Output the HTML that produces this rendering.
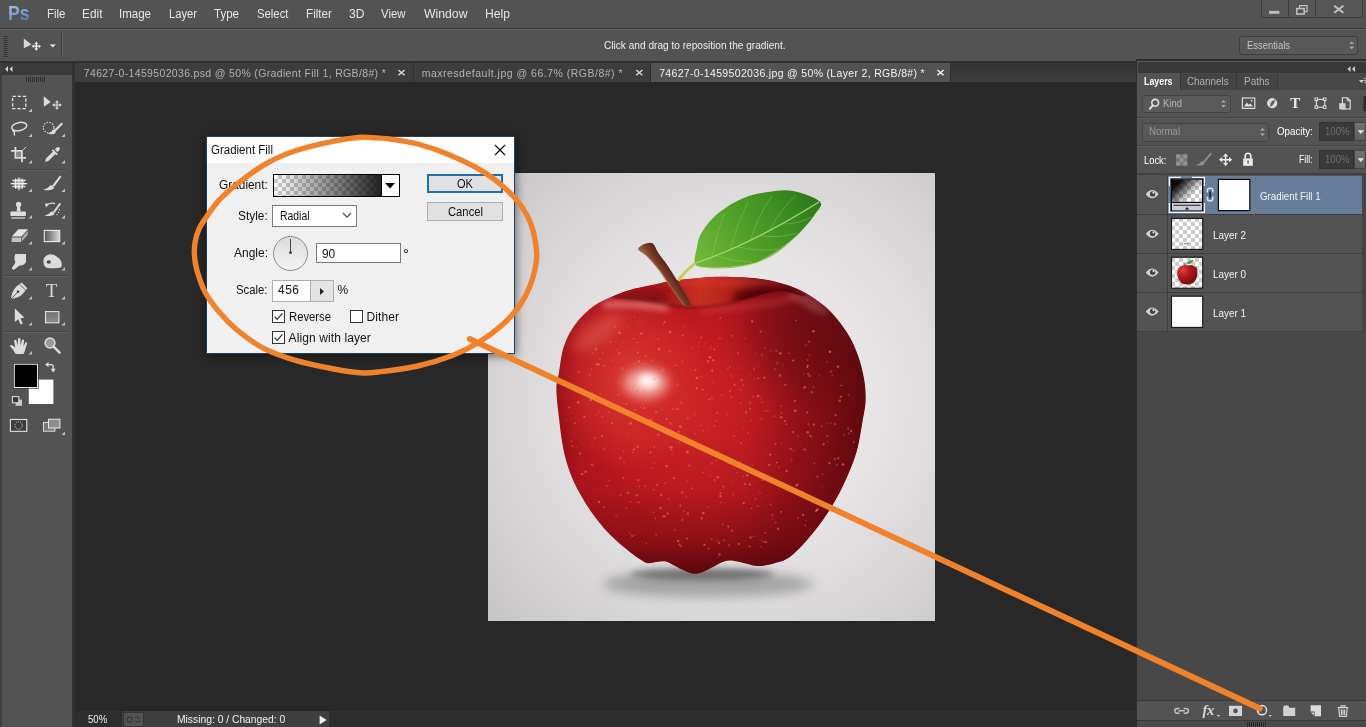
<!DOCTYPE html>
<html lang="en">
<head>
<meta charset="utf-8">
<title>Photoshop - Gradient Fill</title>
<style>
html,body{margin:0;padding:0;background:#282828;}
body{width:1366px;height:727px;overflow:hidden;font-family:"Liberation Sans","DejaVu Sans",sans-serif;}
#app{position:relative;width:1366px;height:727px;overflow:hidden;background:#282828;}
#app div,#app svg,#app span.t{position:absolute;}
.t{white-space:pre;line-height:normal;}
.bx{box-sizing:border-box;}
.t{transform-origin:0 0;}
#texts,#toolicons,#panelicons,#topicons{will-change:transform;}
#texts{left:0;top:0;width:1366px;height:727px;}

</style>
</head>
<body>
<div id="app">
<!-- menu bar -->
<div id="menubar" style="left:0;top:0;width:1366px;height:28px;background:#535353"></div>
<div style="left:0;top:28px;width:1366px;height:1px;background:#353535"></div>
<!-- options bar -->
<div id="optbar" style="left:0;top:29px;width:1366px;height:32px;background:#535353;border-top:1px solid #656565" class="bx"></div>
<div style="left:0;top:61px;width:1366px;height:2px;background:#303030"></div>
<div style="left:61px;top:33px;width:1px;height:24px;background:#3d3d3d"></div>
<div style="left:62px;top:33px;width:1px;height:24px;background:#626262"></div>
<!-- window buttons -->
<div class="bx" style="left:1261px;top:0;width:102px;height:18px;border:1px solid #3c3c3c;border-top:none;background:#565656"></div>
<div style="left:1288px;top:0;width:1px;height:18px;background:#3c3c3c"></div>
<div style="left:1315px;top:0;width:1px;height:18px;background:#3c3c3c"></div>
<!-- essentials -->
<div class="bx" style="left:1239px;top:36px;width:119px;height:19px;border:1px solid #3e3e3e;border-radius:3px;background:#585858"></div>
<!-- tools panel -->
<div id="tools" style="left:0;top:63px;width:72px;height:664px;background:#535353"></div>
<div style="left:0;top:63px;width:72px;height:12px;background:#3a3a3a"></div>
<div style="left:0;top:63px;width:2px;height:664px;background:#3e3e3e"></div>
<div style="left:72px;top:63px;width:3px;height:664px;background:#323232"></div>
<div style="left:5px;top:169px;width:62px;height:1px;background:#454545"></div>
<div style="left:5px;top:170px;width:62px;height:1px;background:#5d5d5d"></div>
<div style="left:5px;top:275px;width:62px;height:1px;background:#454545"></div>
<div style="left:5px;top:276px;width:62px;height:1px;background:#5d5d5d"></div>
<div style="left:5px;top:331px;width:62px;height:1px;background:#454545"></div>
<div style="left:5px;top:332px;width:62px;height:1px;background:#5d5d5d"></div>
<!-- doc tab bar -->
<div id="tabbar" style="left:75px;top:63px;width:1062px;height:19px;background:linear-gradient(180deg,#353535 0%,#3a3a3a 60%,#3d3d3d 100%)"></div>
<div style="left:75px;top:63px;width:338px;height:19px;background:#3d3d3d"></div>
<div style="left:413px;top:63px;width:1px;height:19px;background:#2e2e2e"></div>
<div style="left:414px;top:63px;width:236px;height:19px;background:#3d3d3d"></div>
<div style="left:650px;top:63px;width:1px;height:19px;background:#2e2e2e"></div>
<div style="left:651px;top:63px;width:299px;height:19px;background:#535353"></div>
<div style="left:950px;top:63px;width:1px;height:19px;background:#2e2e2e"></div>
<!-- canvas -->
<div id="canvas" style="left:75px;top:82px;width:1062px;height:629px;background:#282828"></div>
<!-- status bar -->
<div id="status" style="left:75px;top:711px;width:1062px;height:16px;background:#2e2e2e"></div>
<div style="left:122px;top:711px;width:207px;height:16px;background:#404040"></div>
<div class="bx" style="left:123px;top:712px;width:21px;height:15px;background:#535353;border:1px solid #353535"></div>
<!-- right panel -->
<div id="rpanel" style="left:1137px;top:60px;width:229px;height:667px;background:#535353"></div>
<div style="left:1136px;top:60px;width:1px;height:667px;background:#2e2e2e"></div>
<div style="left:1136px;top:59px;width:230px;height:2px;background:#2e2e2e"></div>
<div class="bx" style="left:1137px;top:61px;width:229px;height:12px;background:#383838;border-top:1px solid #5a5a5a;border-left:1px solid #505050;border-top-left-radius:3px"></div>
<div style="left:1137px;top:73px;width:229px;height:17px;background:#484848"></div>
<div style="left:1137px;top:73px;width:43px;height:18px;background:#535353"></div>
<div style="left:1180px;top:73px;width:1px;height:17px;background:#383838"></div>
<div style="left:1181px;top:74px;width:55px;height:16px;background:#444"></div>
<div style="left:1236px;top:73px;width:1px;height:17px;background:#383838"></div>
<div style="left:1237px;top:74px;width:40px;height:16px;background:#444"></div>
<div style="left:1277px;top:73px;width:1px;height:17px;background:#383838"></div>
<!-- kind dropdown -->
<div class="bx" style="left:1142px;top:95px;width:89px;height:18px;border:1px solid #434343;border-radius:3px;background:#595959"></div>
<div style="left:1137px;top:117px;width:229px;height:1px;background:#434343"></div>
<div style="left:1137px;top:118px;width:229px;height:1px;background:#5d5d5d"></div>
<!-- blend dropdown -->
<div class="bx" style="left:1142px;top:123px;width:127px;height:19px;border:1px solid #434343;border-radius:3px;background:#595959"></div>
<div class="bx" style="left:1319px;top:122px;width:35px;height:19px;background:#3a3a3a;border:1px solid #333"></div>
<div class="bx" style="left:1354px;top:122px;width:12px;height:19px;background:linear-gradient(180deg,#727272,#5e5e5e);border:1px solid #444"></div>
<div style="left:1137px;top:145px;width:229px;height:1px;background:#434343"></div>
<div style="left:1137px;top:146px;width:229px;height:1px;background:#5d5d5d"></div>
<div class="bx" style="left:1319px;top:150px;width:35px;height:19px;background:#3a3a3a;border:1px solid #333"></div>
<div class="bx" style="left:1354px;top:150px;width:12px;height:19px;background:linear-gradient(180deg,#727272,#5e5e5e);border:1px solid #444"></div>
<!-- layers list -->
<div style="left:1137px;top:173px;width:229px;height:2px;background:#404040"></div>
<div style="left:1137px;top:175px;width:225px;height:157px;background:#535353"></div>
<div style="left:1168px;top:176px;width:194px;height:38px;background:#677d9a"></div>
<div style="left:1137px;top:214px;width:225px;height:1px;background:#3e3e3e"></div>
<div style="left:1137px;top:253px;width:225px;height:1px;background:#3e3e3e"></div>
<div style="left:1137px;top:292px;width:225px;height:1px;background:#3e3e3e"></div>
<div style="left:1137px;top:331px;width:225px;height:1px;background:#3e3e3e"></div>
<div style="left:1167px;top:175px;width:1px;height:157px;background:#3e3e3e"></div>
<div style="left:1362px;top:175px;width:4px;height:157px;background:#444"></div>
<div style="left:1137px;top:332px;width:229px;height:369px;background:#484848"></div>
<!-- bottom bar -->
<div style="left:1137px;top:700px;width:229px;height:1px;background:#383838"></div>
<div style="left:1137px;top:701px;width:229px;height:19px;background:#535353"></div>
<div style="left:1137px;top:720px;width:229px;height:1px;background:#383838"></div>
<div style="left:1137px;top:721px;width:229px;height:6px;background:#4a4a4a"></div>

<!-- tools panel icons (page coordinates) -->
<svg id="toolicons" style="left:0;top:63px" width="72" height="400" viewBox="0 63 72 400">
  <g fill="#dcdcdc" stroke="none">
    <!-- header collapse arrows -->
    <path d="M8 66 L8 72 L5 69 Z M12.5 66 L12.5 72 L9.5 69 Z" fill="#d0d0d0"/>
    <!-- grip -->
    <g fill="#2f2f2f"><rect x="26" y="77" width="1" height="5"/><rect x="28" y="77" width="1" height="5"/><rect x="30" y="77" width="1" height="5"/><rect x="32" y="77" width="1" height="5"/><rect x="34" y="77" width="1" height="5"/><rect x="36" y="77" width="1" height="5"/><rect x="38" y="77" width="1" height="5"/><rect x="40" y="77" width="1" height="5"/><rect x="42" y="77" width="1" height="5"/><rect x="44" y="77" width="1" height="5"/></g>
    <!-- flyout corner triangles -->
    <g fill="#bdbdbd">
      <path d="M32 108.4 V112 H28.4 Z"/>
      <path d="M32 133.4 V137 H28.4 Z"/><path d="M65 133.4 V137 H61.4 Z"/>
      <path d="M32 159.9 V163.5 H28.4 Z"/><path d="M65 159.9 V163.5 H61.4 Z"/>
      <path d="M32 188.4 V192 H28.4 Z"/><path d="M65 188.4 V192 H61.4 Z"/>
      <path d="M32 214.9 V218.5 H28.4 Z"/><path d="M65 214.9 V218.5 H61.4 Z"/>
      <path d="M32 240.9 V244.5 H28.4 Z"/><path d="M65 240.9 V244.5 H61.4 Z"/>
      <path d="M32 266.9 V270.5 H28.4 Z"/><path d="M65 266.9 V270.5 H61.4 Z"/>
      <path d="M32 295.9 V299.5 H28.4 Z"/><path d="M65 295.9 V299.5 H61.4 Z"/>
      <path d="M32 321.9 V325.5 H28.4 Z"/><path d="M65 321.9 V325.5 H61.4 Z"/>
      <path d="M32 350.9 V354.5 H28.4 Z"/>
      <path d="M65 431.4 V435 H61.4 Z"/>
    </g>
    <!-- marquee -->
    <rect x="12.6" y="96.4" width="13.2" height="12.2" fill="none" stroke="#e6e6e6" stroke-width="1.3" stroke-dasharray="3.2 1.9"/>
    <!-- move tool -->
    <path d="M43.8 96.2 L50.6 102 L43.8 106.8 Z"/>
    <path d="M57 100.2 L59 102.6 H57.6 V104.4 H59.4 V103 L61.8 105 L59.4 107 V105.6 H57.6 V107.4 H59 L57 109.8 L55 107.4 H56.4 V105.6 H54.6 V107 L52.2 105 L54.6 103 V104.4 H56.4 V102.6 H55 Z"/>
    <!-- lasso -->
    <ellipse cx="19.2" cy="126.6" rx="7.6" ry="4" fill="none" stroke="#dcdcdc" stroke-width="1.5" transform="rotate(-12 19.2 126.4)"/>
    <path d="M13.2 129.2 Q12.2 131.2 14.2 131.6 L14.6 135.6" fill="none" stroke="#dcdcdc" stroke-width="1.4"/>
    <!-- quick selection -->
    <circle cx="48.6" cy="127.6" r="5.3" fill="none" stroke="#dcdcdc" stroke-width="1.3" stroke-dasharray="1.3 1.5"/>
    <path d="M61.6 122.6 L63 124 L55.6 131.4 L54 130 Z"/>
    <path d="M54.4 129.6 Q56.6 131.2 55.4 133 Q52.6 135.4 47.6 133.6 Q51.6 132.6 52.2 130.4 Q53.2 129 54.4 129.6 Z"/>
    <!-- crop -->
    <rect x="16.3" y="151.7" width="4.7" height="5.2" fill="#8c8c8c"/>
    <path d="M14.5 147 H16.3 V156.9 H26 V158.7 H14.5 Z M11.1 149.9 H22.8 V162.3 H21 V151.7 H11.1 Z"/>
    <path d="M22.4 150.6 L26.2 146.8" stroke="#cfcfcf" stroke-width="1" fill="none"/>
    <!-- eyedropper -->
    <path d="M45 162 L46 158.6 L53.6 151 L56 153.4 L48.4 161 Z"/>
    <path d="M53 149.2 L57.8 154 L56.6 155.2 L51.8 150.4 Z"/>
    <path d="M55 149.6 Q57.4 146 59.4 147.6 Q61 149.6 57.4 152 Z"/>
    <!-- healing brush -->
    <ellipse cx="19" cy="183.6" rx="6" ry="5.2" fill="#9c9c9c"/>
    <g stroke="#ececec" stroke-width="1.1" fill="none"><path d="M15.6 178.6 V188.8 M18.9 177.4 V190.2 M22.2 178.6 V188.8 M12.2 180.4 H25.8 M10.6 183.6 H27.2 M12.2 186.8 H25.8"/></g>
    <!-- brush -->
    <path d="M60 175.6 L61.4 176.8 L54 187 L52.2 185.6 Z"/>
    <path d="M52 185.4 Q54.6 187 53.6 188.8 Q50.6 191.4 42.8 189.4 Q47.8 188.6 49 186.4 Q50.4 184.6 52 185.4 Z"/>
    <!-- clone stamp -->
    <circle cx="18.6" cy="204.4" r="2.7"/>
    <path d="M17.2 206 H20 L20.6 211.4 H16.6 Z"/>
    <rect x="10.4" y="211.6" width="15.6" height="4.4" rx="0.8"/>
    <rect x="11.4" y="217.4" width="13.6" height="1.2"/>
    <!-- history brush -->
    <path d="M59.6 202.8 L61 204 L54.6 213 L53 211.8 Z"/>
    <path d="M52.8 211.6 Q55 213 54.2 214.6 Q51.6 217 44.4 215.4 Q49 214.6 50 212.6 Q51.4 211 52.8 211.6 Z"/>
    <path d="M46.4 205.6 Q50.2 202 55 203.6" fill="none" stroke="#dcdcdc" stroke-width="1.3"/>
    <path d="M44.8 203.6 L49 203.4 L46.2 207.4 Z"/>
    <circle cx="57" cy="214.6" r="0.7"/><circle cx="58.6" cy="212.4" r="0.7"/><circle cx="59.4" cy="209.8" r="0.7"/>
    <!-- eraser -->
    <path d="M18.4 229.2 H28 L21.4 236.6 H11.8 Z" fill="#e4e4e4"/>
    <path d="M11.8 237.4 H21.4 L21 242 H11.6 Z" fill="#c4c4c4"/>
    <path d="M22.2 237 L28 230.4 L27.6 235 L21.8 241.6 Z" fill="#a9a9a9"/>
    <!-- gradient tool -->
    <rect x="44.3" y="230.4" width="15.4" height="11.2" fill="url(#tgrad)" stroke="#ececec" stroke-width="1.1"/>
    <!-- smudge -->
    <path d="M15.4 254 H26 V262 Q24 266 19.6 265.4 L13.6 270 L11.6 268.4 L15.4 262.4 Q13.4 258 15.4 254 Z"/>
    <!-- burn -->
    <path d="M43.4 262 Q43 256.4 48.6 254.6 Q53.6 253.6 57.4 257 Q62.4 260.4 61.8 266 Q60.8 268.6 57 268 Q52 268.8 47 267.8 Q43.6 266.4 43.4 262 Z"/>
    <ellipse cx="48.8" cy="262" rx="2.2" ry="1.8" fill="#4a4a4a"/>
    <!-- pen -->
    <path d="M21.6 282.4 L27.4 288.2 L25.2 290.4 Q22.6 296.6 12.4 298.8 L11 297.4 Q13.4 287.4 19.4 284.6 Z"/>
    <path d="M20.2 284.8 L25 289.6" stroke="#535353" stroke-width="1" fill="none"/>
    <circle cx="18" cy="291.8" r="1.3" fill="#3c3c3c"/>
    <path d="M12 298 L17.4 292.4" stroke="#3c3c3c" stroke-width="0.8" fill="none"/>
    <!-- path selection -->
    <path d="M14.8 308.6 L14.8 322 L18.2 319.2 L20.6 324.6 L22.8 323.6 L20.4 318.4 L24.4 317.6 Z"/>
    <!-- rectangle shape -->
    <rect x="45.5" y="311.6" width="13.4" height="11.2" fill="url(#rgrad)" stroke="#e2e2e2" stroke-width="1.1"/>
    <!-- hand -->
    <path d="M15.6 354 Q13 349 9.8 346 Q10.6 344.4 12.6 345.4 L15.2 347.8 L14 340.4 Q15.2 339 16.4 340.4 L17.6 345.4 L18 338.6 Q19.4 337.4 20.4 338.8 L20.6 345.4 L22 339.8 Q23.4 338.8 24.2 340.2 L23.4 346.4 L25.4 342.4 Q26.8 341.8 27.2 343.2 L25.2 349.6 Q24.8 352.4 23.4 354 Z"/>
    <!-- zoom -->
    <circle cx="50" cy="343" r="4.9" fill="#9a9a9a" stroke="#dcdcdc" stroke-width="1.5"/>
    <path d="M53.6 346.6 L59.6 352.6" stroke="#dcdcdc" stroke-width="2.4" stroke-linecap="round" fill="none"/>
    <!-- colour swatches -->
    <rect x="28.8" y="379.6" width="24.6" height="24.4" fill="#ffffff"/>
    <rect x="13.2" y="363.2" width="25.4" height="25.4" fill="#0a0a0a"/>
    <rect x="14.2" y="364.2" width="23.4" height="23.4" fill="#000" stroke="#fff" stroke-width="1"/>
    <!-- swap arrows -->
    <path d="M48.4 364.6 H51.4 Q53.2 364.6 53.2 366.6 V369" fill="none" stroke="#e0e0e0" stroke-width="1.3"/>
    <path d="M45 364.6 L48.6 362 V367.2 Z M53.2 372.4 L50.6 368.8 H55.8 Z"/>
    <!-- default colours -->
    <rect x="15.6" y="399.6" width="6.4" height="6.2" fill="#c8c8c8"/>
    <rect x="12.4" y="396.6" width="6.4" height="6.2" fill="#3a3a3a" stroke="#e0e0e0" stroke-width="1"/>
    <!-- quick mask -->
    <rect x="10.4" y="419.5" width="16.4" height="11.8" fill="#3c3c3c" stroke="#e6e6e6" stroke-width="1.1"/>
    <circle cx="18.6" cy="425.4" r="3.7" fill="none" stroke="#d0d0d0" stroke-width="1" stroke-dasharray="1.2 1.1"/>
    <!-- screen mode -->
    <rect x="43.5" y="422.4" width="11.4" height="8.8" fill="#767676" stroke="#e0e0e0" stroke-width="1"/>
    <rect x="48.5" y="419.2" width="11.4" height="8.8" fill="#8e8e8e" stroke="#e8e8e8" stroke-width="1"/>
  </g>
  <defs>
    <linearGradient id="tgrad" x1="0" x2="1" y1="0" y2="0"><stop offset="0" stop-color="#555"/><stop offset="1" stop-color="#d8d8d8"/></linearGradient>
    <linearGradient id="rgrad" x1="0" x2="0" y1="0" y2="1"><stop offset="0" stop-color="#727272"/><stop offset="1" stop-color="#8e8e8e"/></linearGradient>
  </defs>
</svg>
<span class="t" style="left:45.8px;top:279.6px;font-size:19px;color:#d8d8d8;font-family:'Liberation Serif',serif;line-height:normal">T</span>
<!-- right panel icons (page coordinates) -->
<svg id="panelicons" style="left:1137px;top:62px" width="229" height="665" viewBox="1137 62 229 665">
  <defs>
    <pattern id="chk" x="1171" y="218" width="8" height="8" patternUnits="userSpaceOnUse"><rect width="8" height="8" fill="#fff"/><rect width="4" height="4" fill="#cbcbcb"/><rect x="4" y="4" width="4" height="4" fill="#cbcbcb"/></pattern>
    <linearGradient id="gthumb" x1="1171" y1="179" x2="1190" y2="198" gradientUnits="userSpaceOnUse"><stop offset="0" stop-color="#000"/><stop offset="0.3" stop-color="#000" stop-opacity="0.95"/><stop offset="1" stop-color="#000" stop-opacity="0"/></linearGradient>
    <radialGradient id="apthumb" cx="1183" cy="270" r="14" gradientUnits="userSpaceOnUse"><stop offset="0" stop-color="#e0403a"/><stop offset="0.5" stop-color="#b3181e"/><stop offset="1" stop-color="#7e0d12"/></radialGradient>
    <g id="eye">
      <path d="M-6.4 0 Q-3.3 -4.1 0 -4.1 Q3.3 -4.1 6.4 0 Q3.3 4.1 0 4.1 Q-3.3 4.1 -6.4 0 Z" fill="#d2d2d2"/>
      <circle cx="0.4" cy="-0.3" r="2.7" fill="#444"/>
      <circle cx="1.3" cy="-1.5" r="1.1" fill="#e8e8e8"/>
    </g>
  </defs>
  <!-- header collapse arrows & menu -->
  <path d="M1350.5 66 V72 L1347.5 69 Z M1355 66 V72 L1352 69 Z" fill="#d0d0d0"/>
  <path d="M1359 80 H1364 L1361.5 83 Z M1364.4 78 H1366 V79 H1364.4 Z M1364.4 80 H1366 V81 H1364.4 Z M1364.4 82 H1366 V83 H1364.4 Z" fill="#d0d0d0"/>
  <!-- search icon -->
  <circle cx="1155.2" cy="102.8" r="3.4" fill="none" stroke="#e0e0e0" stroke-width="1.6"/>
  <path d="M1152.8 105.4 L1149.8 108.8" stroke="#e0e0e0" stroke-width="2" stroke-linecap="round"/>
  <!-- dropdown up/down arrows -->
  <g fill="#a8a8a8">
    <path d="M1221 102.6 L1223.5 100 L1226 102.6 Z M1221 105 L1223.5 107.6 L1226 105 Z"/>
    <path d="M1260 130.6 L1262.5 128 L1265 130.6 Z M1260 133.4 L1262.5 136 L1265 133.4 Z"/>
  </g>
  <!-- filter: pixel layers -->
  <rect x="1242.4" y="98" width="12.4" height="10.4" fill="none" stroke="#e6e6e6" stroke-width="1.1"/>
  <path d="M1244 106.6 L1246.8 102.6 L1248.6 104.8 L1250.4 103.6 L1253 106.6 Z" fill="#e0e0e0"/>
  <circle cx="1251.6" cy="100.8" r="0.9" fill="#e0e0e0"/>
  <!-- filter: adjustment layers -->
  <circle cx="1272.2" cy="103.2" r="4.6" fill="#d8d8d8" stroke="#e8e8e8" stroke-width="1"/>
  <path d="M1270 107 Q1274.6 104.8 1275 99.8 Q1270 101 1270 107 Z" fill="#5c5c5c"/>
  <!-- filter: shape layers -->
  <rect x="1316.4" y="99.4" width="8.4" height="7.8" fill="none" stroke="#e0e0e0" stroke-width="1.1"/>
  <g fill="#535353" stroke="#e6e6e6" stroke-width="0.9"><rect x="1315" y="98" width="2.6" height="2.6"/><rect x="1323.4" y="98" width="2.6" height="2.6"/><rect x="1315" y="105.8" width="2.6" height="2.6"/><rect x="1323.4" y="105.8" width="2.6" height="2.6"/></g>
  <!-- filter: smart objects -->
  <path d="M1342.4 97.8 H1347.4 L1350.2 100.6 V109 H1342.4 Z" fill="none" stroke="#e6e6e6" stroke-width="1.1"/>
  <path d="M1347.2 98 V100.8 H1350" fill="none" stroke="#e6e6e6" stroke-width="0.9"/>
  <rect x="1339.2" y="103.2" width="6.4" height="6.2" fill="#cfcfcf"/>
  <!-- filter toggle -->
  <rect x="1363.4" y="96" width="2.6" height="15" fill="#2c2c2c"/>
  <!-- opacity / fill arrows -->
  <path d="M1357.6 130.2 H1364 L1360.8 134 Z" fill="#e6e6e6"/>
  <path d="M1357.6 158.2 H1364 L1360.8 162 Z" fill="#e6e6e6"/>
  <!-- lock transparent pixels -->
  <rect x="1176.2" y="154.4" width="11" height="11.2" fill="#7a7a7a"/>
  <g fill="#949494"><rect x="1176.2" y="154.4" width="3.7" height="3.7"/><rect x="1183.5" y="154.4" width="3.7" height="3.7"/><rect x="1179.9" y="158.1" width="3.6" height="3.7"/><rect x="1176.2" y="161.8" width="3.7" height="3.8"/><rect x="1183.5" y="161.8" width="3.7" height="3.8"/></g>
  <!-- lock image pixels (brush) -->
  <path d="M1210.6 152.6 L1212 153.8 L1204.8 162.6 L1203.2 161.4 Z" fill="#8e8e8e"/>
  <path d="M1203 161.2 Q1205.2 162.6 1204.4 164.2 Q1201.8 166.6 1195.6 165 Q1199.6 164.2 1200.6 162.2 Q1201.8 160.6 1203 161.2 Z" fill="#8e8e8e"/>
  <!-- lock position -->
  <path d="M1225.6 153.2 L1228.2 156.4 H1226.4 V158.9 H1229 V157.1 L1232.2 159.7 L1229 162.3 V160.5 H1226.4 V163 H1228.2 L1225.6 166.2 L1223 163 H1224.8 V160.5 H1222.2 V162.3 L1219 159.7 L1222.2 157.1 V158.9 H1224.8 V156.4 H1223 Z" fill="#ececec"/>
  <!-- lock all -->
  <path d="M1245.2 158.6 V156.4 Q1245.2 153.2 1248 153.2 Q1250.8 153.2 1250.8 156.4 V158.6" fill="none" stroke="#ececec" stroke-width="1.6"/>
  <rect x="1243.2" y="158.4" width="9.6" height="7.4" fill="#ececec"/>
  <rect x="1247.4" y="160.6" width="1.3" height="3" fill="#4a4a4a"/>
  <!-- eyes -->
  <use href="#eye" x="1152.2" y="194.2"/><use href="#eye" x="1152.2" y="233.8"/><use href="#eye" x="1152.2" y="272.6"/><use href="#eye" x="1152.2" y="311.6"/>
  <!-- layer 1: gradient fill thumb -->
  <path d="M1169.4 186 V177.3 H1181 M1192 177.3 H1204.4 V186 M1204.4 203 V212.4 H1169.4 V203" fill="none" stroke="#f4f6fa" stroke-width="1.3"/>
  <rect x="1170.7" y="178.6" width="32.6" height="32.6" fill="#0c0c0c"/>
  <rect x="1172" y="179.8" width="30" height="22" fill="url(#chk)"/>
  <rect x="1172" y="179.8" width="30" height="22" fill="url(#gthumb)"/>
  <rect x="1172" y="203" width="30" height="7.4" fill="#c9cdd6"/>
  <rect x="1173.6" y="204.8" width="26.8" height="0.9" fill="#111"/>
  <path d="M1185 209.4 L1187 207 L1189 209.4 Z" fill="#111"/>
  <!-- link -->
  <g fill="none" stroke="#d6e4f2" stroke-width="1.5"><path d="M1207.4 192.6 V190.4 Q1207.4 188.2 1210.1 188.2 Q1212.8 188.2 1212.8 190.4 V192.6"/><path d="M1207.4 196.6 V198.8 Q1207.4 201 1210.1 201 Q1212.8 201 1212.8 198.8 V196.6"/></g>
  <rect x="1209.2" y="191.4" width="1.8" height="6.4" fill="#1e2c3c"/>
  <!-- mask thumb -->
  <rect x="1218.4" y="179.4" width="31.4" height="31.2" fill="#fff" stroke="#0a0a0a" stroke-width="1.2"/>
  <!-- layer 2 thumb -->
  <rect x="1171.5" y="218.4" width="31.2" height="31" fill="url(#chk)" stroke="#141414" stroke-width="1.1"/>
  <ellipse cx="1186" cy="243.6" rx="3" ry="0.9" fill="#8c8c8c" opacity="0.8"/>
  <!-- layer 0 thumb -->
  <rect x="1171.5" y="257.2" width="31.2" height="31" fill="url(#chk)" stroke="#141414" stroke-width="1.1"/>
  <path d="M1186.6 265.6 Q1192 263.6 1196.4 267.6 Q1198.6 272 1196.2 279 Q1193.6 283.8 1190.6 284 Q1187 285 1182.4 283.8 Q1178.4 281.4 1177.2 274.6 Q1177 267.6 1181.6 265.8 Q1184 265 1186.6 265.6 Z" fill="url(#apthumb)"/>
  <path d="M1185.6 266.4 L1184.4 263.4" stroke="#5a2a18" stroke-width="0.8"/>
  <path d="M1186.4 264.6 Q1187.6 260.6 1193.6 259.8 Q1192.6 264 1186.4 264.6 Z" fill="#4c9a2a"/>
  <!-- layer 1 thumb -->
  <rect x="1171.5" y="296.2" width="31.2" height="31.2" fill="#fdfdfd" stroke="#141414" stroke-width="1.1"/>
  <!-- bottom bar icons -->
  <g fill="none" stroke="#c4c4c4" stroke-width="1.5">
    <path d="M1179.6 708.4 H1177.4 Q1174.8 708.4 1174.8 710.8 Q1174.8 713.2 1177.4 713.2 H1179.6"/>
    <path d="M1183.6 708.4 H1185.8 Q1188.4 708.4 1188.4 710.8 Q1188.4 713.2 1185.8 713.2 H1183.6"/>
    <path d="M1178.4 710.8 H1184.8"/>
  </g>
  <rect x="1229" y="705.8" width="13" height="10.2" fill="#d4d4d4"/>
  <circle cx="1235.5" cy="710.9" r="2.3" fill="#535353"/>
  <circle cx="1262" cy="710.2" r="4.6" fill="none" stroke="#e6e6e6" stroke-width="1.5"/>
  <path d="M1258.8 713.4 A4.6 4.6 0 0 1 1258.8 707 Z" fill="#e6e6e6"/>
  <path d="M1283.2 706.8 V716 H1295.2 V707.8 H1289.4 L1288.2 705.6 H1284.2 Z" fill="#d2d2d2"/>
  <path d="M1310.6 705.2 H1321 V716.2 H1314.6 L1314.6 711.4 H1310.6 Z" fill="#dadada"/>
  <path d="M1311 712.4 H1313.8 V715.4 Z" fill="#dadada"/>
  <g fill="none" stroke="#d2d2d2" stroke-width="1.2"><path d="M1337.6 707.6 H1348.4 M1341 707.4 V705.8 H1345 V707.4"/><path d="M1338.8 708.4 L1339.6 716.4 H1346.4 L1347.2 708.4 M1341.4 709.6 V715 M1343 709.6 V715 M1344.6 709.6 V715"/></g>
  <path d="M1216.8 715 H1220 L1218.4 716.8 Z M1268.6 715 H1271.8 L1270.2 716.8 Z" fill="#dcdcdc"/>
  <!-- grip -->
  <g fill="#2a2a2a"><rect x="1247" y="722" width="1" height="5"/><rect x="1249" y="722" width="1" height="5"/><rect x="1251" y="722" width="1" height="5"/><rect x="1253" y="722" width="1" height="5"/><rect x="1255" y="722" width="1" height="5"/><rect x="1257" y="722" width="1" height="5"/><rect x="1259" y="722" width="1" height="5"/><rect x="1261" y="722" width="1" height="5"/><rect x="1263" y="722" width="1" height="5"/><rect x="1265" y="722" width="1" height="5"/></g>
</svg>
<span class="t" style="left:1290.2px;top:94.9px;font-size:15px;font-weight:700;color:#ececec;font-family:'Liberation Serif',serif">T</span>
<span class="t" style="left:1202.4px;top:701.8px;font-size:14.5px;font-style:italic;font-weight:700;color:#dadada;font-family:'Liberation Serif',serif;letter-spacing:-0.2px">fx</span>
<!-- top bar / tab / status icons (page coordinates) -->
<svg id="topicons" style="left:0;top:0" width="1366" height="727" viewBox="0 0 1366 727">
  <!-- window buttons -->
  <rect x="1269" y="10.8" width="10.4" height="3" fill="#bdbdbd"/>
  <rect x="1299.6" y="5.6" width="7.4" height="6" fill="none" stroke="#bdbdbd" stroke-width="1.3"/>
  <rect x="1296.8" y="8.6" width="7.4" height="5.4" fill="#535353" stroke="#bdbdbd" stroke-width="1.6"/>
  <path d="M1334.2 5.8 L1343.4 12.8 M1343.4 5.8 L1334.2 12.8" stroke="#c2c2c2" stroke-width="2" fill="none"/>
  <path d="M1349.3 44 L1351.7 41.4 L1354.1 44 Z M1349.3 46.6 L1351.7 49.2 L1354.1 46.6 Z" fill="#a8a8a8"/>
  <!-- options bar grip -->
  <g fill="#333"><rect x="3.6" y="36" width="4" height="1"/><rect x="3.6" y="38" width="4" height="1"/><rect x="3.6" y="40" width="4" height="1"/><rect x="3.6" y="42" width="4" height="1"/><rect x="3.6" y="44" width="4" height="1"/><rect x="3.6" y="46" width="4" height="1"/><rect x="3.6" y="48" width="4" height="1"/><rect x="3.6" y="50" width="4" height="1"/><rect x="3.6" y="52" width="4" height="1"/><rect x="3.6" y="54" width="4" height="1"/><rect x="3.6" y="56" width="4" height="1"/></g>
  <!-- current tool preset -->
  <path d="M23.8 38.4 L31.4 44.4 L23.8 48.2 Z" fill="#d8d8d8"/>
  <path d="M36.3 41.6 L38.3 44 H37 V45.6 H38.8 V44.4 L41 46.2 L38.8 48 V46.8 H37 V48.4 H38.3 L36.3 50.8 L34.3 48.4 H35.6 V46.8 H33.8 V48 L31.6 46.2 L33.8 44.4 V45.6 H35.6 V44 H34.3 Z" fill="#f0f0f0"/>
  <path d="M49.8 44.4 H55.8 L52.8 47.4 Z" fill="#e6e6e6"/>
  <!-- tab close marks -->
  <g stroke="#d6d6d6" stroke-width="1.5" fill="none">
    <path d="M398.4 70 L404.6 75.2 M404.6 70 L398.4 75.2"/>
    <path d="M636.2 70 L642.4 75.2 M642.4 70 L636.2 75.2"/>
    <path d="M937.4 70 L943.6 75.2 M943.6 70 L937.4 75.2" stroke="#f2f2f2"/>
  </g>
  <!-- status bar icons -->
  <circle cx="129.6" cy="719.6" r="2.6" fill="none" stroke="#3c3c3c" stroke-width="1.3"/>
  <path d="M135 717.6 Q138 716.4 139.4 719 M140.2 721 Q137.6 723 135.4 720.8" fill="none" stroke="#3c3c3c" stroke-width="1.2"/>
  <path d="M319.6 715.6 V724.6 L326.6 720.1 Z" fill="#f0f0f0"/>
</svg>

<!-- document canvas with apple photo (vector approximation) -->
<div id="doc" style="left:488px;top:173px;width:447px;height:448px;background:#d3d1d2;overflow:hidden">
<svg style="left:0;top:0" width="447" height="448" viewBox="488 173 447 448">
  <defs>
    <radialGradient id="bgg" cx="740" cy="398" r="360" gradientUnits="userSpaceOnUse">
      <stop offset="0" stop-color="#f0efef"/><stop offset="0.4" stop-color="#e6e4e5"/><stop offset="0.75" stop-color="#d2d0d1"/><stop offset="1" stop-color="#c3c1c2"/>
    </radialGradient>
    <radialGradient id="apg" cx="668" cy="390" r="215" gradientUnits="userSpaceOnUse">
      <stop offset="0" stop-color="#cc2024"/><stop offset="0.4" stop-color="#b9181e"/><stop offset="0.75" stop-color="#a2131a"/><stop offset="1" stop-color="#800d13"/>
    </radialGradient>
    <linearGradient id="apbot" x1="0" y1="490" x2="0" y2="575" gradientUnits="userSpaceOnUse">
      <stop offset="0" stop-color="#52060b" stop-opacity="0"/><stop offset="0.6" stop-color="#52060b" stop-opacity="0.3"/><stop offset="1" stop-color="#4a050a" stop-opacity="0.8"/>
    </linearGradient>
    <linearGradient id="apside" x1="556" y1="0" x2="866" y2="0" gradientUnits="userSpaceOnUse">
      <stop offset="0" stop-color="#6a080e" stop-opacity="0.4"/><stop offset="0.08" stop-color="#6a080e" stop-opacity="0.06"/><stop offset="0.2" stop-color="#6a080e" stop-opacity="0"/><stop offset="0.6" stop-color="#5a070d" stop-opacity="0"/><stop offset="0.82" stop-color="#5a070d" stop-opacity="0.38"/><stop offset="1" stop-color="#4e060b" stop-opacity="0.7"/>
    </linearGradient>
    <linearGradient id="cavg" x1="612" y1="0" x2="805" y2="0" gradientUnits="userSpaceOnUse">
      <stop offset="0" stop-color="#a5161a"/><stop offset="0.25" stop-color="#9a1216"/><stop offset="0.45" stop-color="#c8301f"/><stop offset="0.62" stop-color="#b02219"/><stop offset="0.78" stop-color="#650a0f"/><stop offset="1" stop-color="#7e0e13"/>
    </linearGradient>
    <linearGradient id="leafg" x1="700" y1="268" x2="812" y2="196" gradientUnits="userSpaceOnUse">
      <stop offset="0" stop-color="#74b83a"/><stop offset="0.35" stop-color="#55a42b"/><stop offset="0.7" stop-color="#3f9022"/><stop offset="1" stop-color="#2c7a1a"/>
    </linearGradient>
    <linearGradient id="stemg" x1="656" y1="274" x2="668" y2="266" gradientUnits="userSpaceOnUse">
      <stop offset="0" stop-color="#a0603e"/><stop offset="0.5" stop-color="#7a3c28"/><stop offset="1" stop-color="#55241a"/>
    </linearGradient>
    <radialGradient id="rgDark"><stop offset="0" stop-color="#560a0f" stop-opacity="0.55"/><stop offset="0.55" stop-color="#560a0f" stop-opacity="0.3"/><stop offset="1" stop-color="#560a0f" stop-opacity="0"/></radialGradient>
    <radialGradient id="rgL1"><stop offset="0" stop-color="#e84a3c" stop-opacity="0.6"/><stop offset="0.5" stop-color="#e44438" stop-opacity="0.33"/><stop offset="1" stop-color="#e44438" stop-opacity="0"/></radialGradient>
    <radialGradient id="rgL2"><stop offset="0" stop-color="#d62c2a" stop-opacity="0.42"/><stop offset="0.5" stop-color="#d22a28" stop-opacity="0.22"/><stop offset="1" stop-color="#d22a28" stop-opacity="0"/></radialGradient>
    <filter id="b1" filterUnits="userSpaceOnUse" x="488" y="173" width="447" height="448"><feGaussianBlur stdDeviation="1.2"/></filter>
    <filter id="b3" filterUnits="userSpaceOnUse" x="488" y="173" width="447" height="448"><feGaussianBlur stdDeviation="3"/></filter>
    <filter id="b6" filterUnits="userSpaceOnUse" x="488" y="173" width="447" height="448"><feGaussianBlur stdDeviation="6"/></filter>
    <clipPath id="apclip"><path d="M556.4 389.5 C556.4 381.9 557.8 379.5 559.0 372.4 C560.2 365.3 561.1 354.9 563.7 347.0 C566.3 339.1 569.8 331.8 574.8 325.0 C579.8 318.2 586.9 311.0 593.8 306.0 C600.7 301.0 609.1 297.9 616.0 295.0 C622.9 292.1 628.1 290.5 634.9 288.6 C641.7 286.8 650.7 285.2 657.0 283.9 C663.3 282.6 663.8 281.9 672.8 280.7 C681.8 279.5 699.2 277.5 710.8 276.9 C722.4 276.3 733.2 276.8 742.4 277.3 C751.6 277.8 758.4 278.5 766.0 279.8 C773.6 281.1 781.4 283.1 788.0 285.3 C794.6 287.5 799.7 289.7 805.6 293.0 C811.5 296.3 818.1 300.9 823.2 305.1 C828.3 309.3 832.0 313.0 836.4 318.3 C840.8 323.6 845.9 330.6 849.6 337.0 C853.3 343.4 856.0 349.8 858.4 356.8 C860.8 363.8 862.8 371.6 864.0 378.8 C865.2 386.0 865.8 393.0 865.6 400.0 C865.4 407.0 864.2 412.2 862.6 421.0 C861.0 429.8 859.5 442.1 856.3 452.7 C853.1 463.3 848.4 474.4 843.6 484.4 C838.9 494.4 833.6 503.9 827.8 512.8 C822.0 521.7 815.1 530.6 808.8 538.0 C802.5 545.4 795.6 552.8 789.8 557.0 C784.0 561.2 779.3 561.9 774.0 563.4 C768.7 564.9 762.9 566.0 758.2 566.0 C753.5 566.0 750.4 564.3 745.6 563.4 C740.9 562.5 734.0 560.6 729.7 560.6 C725.4 560.6 722.6 562.2 720.0 563.2 C717.4 564.2 716.8 565.0 713.9 566.5 C711.0 568.0 706.2 570.8 702.9 572.0 C699.6 573.2 697.0 574.0 694.0 573.8 C691.0 573.6 688.5 572.4 685.2 571.0 C681.9 569.6 677.5 567.0 674.2 565.4 C670.9 563.8 668.3 562.0 665.4 561.5 C662.5 561.0 659.5 561.8 656.6 562.1 C653.7 562.4 650.4 563.6 647.8 563.2 C645.2 562.9 644.1 561.8 641.2 560.0 C638.3 558.2 634.2 555.3 630.2 552.2 C626.2 549.1 621.4 545.2 617.0 541.2 C612.6 537.2 608.0 532.8 603.8 528.0 C599.6 523.2 595.6 518.1 591.7 512.6 C587.9 507.1 584.0 500.9 580.7 495.0 C577.4 489.1 574.5 483.6 571.9 477.4 C569.3 471.2 567.0 464.2 565.3 457.6 C563.6 451.0 562.5 444.6 561.5 438.0 C560.5 431.4 559.9 426.1 559.0 418.0 C558.1 409.9 556.4 397.1 556.4 389.5Z"/></clipPath>
    <clipPath id="cavclip"><path d="M612.0 297.0 C611.2 298.8 623.7 298.7 630.0 299.5 C636.3 300.3 643.3 301.0 650.0 302.0 C656.7 303.0 663.7 304.7 670.0 305.5 C676.3 306.3 682.2 306.8 688.0 307.0 C693.8 307.2 698.8 307.0 705.0 306.5 C711.2 306.0 718.3 305.2 725.0 304.0 C731.7 302.8 738.8 301.1 745.0 299.5 C751.2 297.9 756.2 295.9 762.0 294.5 C767.8 293.1 772.8 290.8 780.0 291.0 C787.2 291.2 802.8 296.6 805.0 296.0 C807.2 295.4 799.5 290.0 793.0 287.3 C786.5 284.6 774.4 281.5 766.0 279.8 C757.6 278.1 751.6 277.8 742.4 277.3 C733.2 276.8 722.4 276.3 710.8 276.9 C699.2 277.5 681.8 279.5 672.8 280.7 C663.8 281.9 663.3 282.6 657.0 283.9 C650.7 285.2 642.4 286.4 634.9 288.6 C627.4 290.8 612.8 295.2 612.0 297.0Z"/></clipPath>
  </defs>
  <rect x="488" y="173" width="447" height="448" fill="url(#bgg)"/>
  <!-- ground shadow -->
  <ellipse cx="708" cy="584" rx="105" ry="13" fill="#555" opacity="0.42" filter="url(#b6)"/>
  <ellipse cx="702" cy="574" rx="72" ry="6" fill="#222" opacity="0.45" filter="url(#b3)"/>
  <!-- apple body -->
  <path d="M556.4 389.5 C556.4 381.9 557.8 379.5 559.0 372.4 C560.2 365.3 561.1 354.9 563.7 347.0 C566.3 339.1 569.8 331.8 574.8 325.0 C579.8 318.2 586.9 311.0 593.8 306.0 C600.7 301.0 609.1 297.9 616.0 295.0 C622.9 292.1 628.1 290.5 634.9 288.6 C641.7 286.8 650.7 285.2 657.0 283.9 C663.3 282.6 663.8 281.9 672.8 280.7 C681.8 279.5 699.2 277.5 710.8 276.9 C722.4 276.3 733.2 276.8 742.4 277.3 C751.6 277.8 758.4 278.5 766.0 279.8 C773.6 281.1 781.4 283.1 788.0 285.3 C794.6 287.5 799.7 289.7 805.6 293.0 C811.5 296.3 818.1 300.9 823.2 305.1 C828.3 309.3 832.0 313.0 836.4 318.3 C840.8 323.6 845.9 330.6 849.6 337.0 C853.3 343.4 856.0 349.8 858.4 356.8 C860.8 363.8 862.8 371.6 864.0 378.8 C865.2 386.0 865.8 393.0 865.6 400.0 C865.4 407.0 864.2 412.2 862.6 421.0 C861.0 429.8 859.5 442.1 856.3 452.7 C853.1 463.3 848.4 474.4 843.6 484.4 C838.9 494.4 833.6 503.9 827.8 512.8 C822.0 521.7 815.1 530.6 808.8 538.0 C802.5 545.4 795.6 552.8 789.8 557.0 C784.0 561.2 779.3 561.9 774.0 563.4 C768.7 564.9 762.9 566.0 758.2 566.0 C753.5 566.0 750.4 564.3 745.6 563.4 C740.9 562.5 734.0 560.6 729.7 560.6 C725.4 560.6 722.6 562.2 720.0 563.2 C717.4 564.2 716.8 565.0 713.9 566.5 C711.0 568.0 706.2 570.8 702.9 572.0 C699.6 573.2 697.0 574.0 694.0 573.8 C691.0 573.6 688.5 572.4 685.2 571.0 C681.9 569.6 677.5 567.0 674.2 565.4 C670.9 563.8 668.3 562.0 665.4 561.5 C662.5 561.0 659.5 561.8 656.6 562.1 C653.7 562.4 650.4 563.6 647.8 563.2 C645.2 562.9 644.1 561.8 641.2 560.0 C638.3 558.2 634.2 555.3 630.2 552.2 C626.2 549.1 621.4 545.2 617.0 541.2 C612.6 537.2 608.0 532.8 603.8 528.0 C599.6 523.2 595.6 518.1 591.7 512.6 C587.9 507.1 584.0 500.9 580.7 495.0 C577.4 489.1 574.5 483.6 571.9 477.4 C569.3 471.2 567.0 464.2 565.3 457.6 C563.6 451.0 562.5 444.6 561.5 438.0 C560.5 431.4 559.9 426.1 559.0 418.0 C558.1 409.9 556.4 397.1 556.4 389.5Z" fill="url(#apg)"/>
  <g clip-path="url(#apclip)">
    <path d="M556.4 389.5 C556.4 381.9 557.8 379.5 559.0 372.4 C560.2 365.3 561.1 354.9 563.7 347.0 C566.3 339.1 569.8 331.8 574.8 325.0 C579.8 318.2 586.9 311.0 593.8 306.0 C600.7 301.0 609.1 297.9 616.0 295.0 C622.9 292.1 628.1 290.5 634.9 288.6 C641.7 286.8 650.7 285.2 657.0 283.9 C663.3 282.6 663.8 281.9 672.8 280.7 C681.8 279.5 699.2 277.5 710.8 276.9 C722.4 276.3 733.2 276.8 742.4 277.3 C751.6 277.8 758.4 278.5 766.0 279.8 C773.6 281.1 781.4 283.1 788.0 285.3 C794.6 287.5 799.7 289.7 805.6 293.0 C811.5 296.3 818.1 300.9 823.2 305.1 C828.3 309.3 832.0 313.0 836.4 318.3 C840.8 323.6 845.9 330.6 849.6 337.0 C853.3 343.4 856.0 349.8 858.4 356.8 C860.8 363.8 862.8 371.6 864.0 378.8 C865.2 386.0 865.8 393.0 865.6 400.0 C865.4 407.0 864.2 412.2 862.6 421.0 C861.0 429.8 859.5 442.1 856.3 452.7 C853.1 463.3 848.4 474.4 843.6 484.4 C838.9 494.4 833.6 503.9 827.8 512.8 C822.0 521.7 815.1 530.6 808.8 538.0 C802.5 545.4 795.6 552.8 789.8 557.0 C784.0 561.2 779.3 561.9 774.0 563.4 C768.7 564.9 762.9 566.0 758.2 566.0 C753.5 566.0 750.4 564.3 745.6 563.4 C740.9 562.5 734.0 560.6 729.7 560.6 C725.4 560.6 722.6 562.2 720.0 563.2 C717.4 564.2 716.8 565.0 713.9 566.5 C711.0 568.0 706.2 570.8 702.9 572.0 C699.6 573.2 697.0 574.0 694.0 573.8 C691.0 573.6 688.5 572.4 685.2 571.0 C681.9 569.6 677.5 567.0 674.2 565.4 C670.9 563.8 668.3 562.0 665.4 561.5 C662.5 561.0 659.5 561.8 656.6 562.1 C653.7 562.4 650.4 563.6 647.8 563.2 C645.2 562.9 644.1 561.8 641.2 560.0 C638.3 558.2 634.2 555.3 630.2 552.2 C626.2 549.1 621.4 545.2 617.0 541.2 C612.6 537.2 608.0 532.8 603.8 528.0 C599.6 523.2 595.6 518.1 591.7 512.6 C587.9 507.1 584.0 500.9 580.7 495.0 C577.4 489.1 574.5 483.6 571.9 477.4 C569.3 471.2 567.0 464.2 565.3 457.6 C563.6 451.0 562.5 444.6 561.5 438.0 C560.5 431.4 559.9 426.1 559.0 418.0 C558.1 409.9 556.4 397.1 556.4 389.5Z" fill="url(#apbot)"/>
    <path d="M556.4 389.5 C556.4 381.9 557.8 379.5 559.0 372.4 C560.2 365.3 561.1 354.9 563.7 347.0 C566.3 339.1 569.8 331.8 574.8 325.0 C579.8 318.2 586.9 311.0 593.8 306.0 C600.7 301.0 609.1 297.9 616.0 295.0 C622.9 292.1 628.1 290.5 634.9 288.6 C641.7 286.8 650.7 285.2 657.0 283.9 C663.3 282.6 663.8 281.9 672.8 280.7 C681.8 279.5 699.2 277.5 710.8 276.9 C722.4 276.3 733.2 276.8 742.4 277.3 C751.6 277.8 758.4 278.5 766.0 279.8 C773.6 281.1 781.4 283.1 788.0 285.3 C794.6 287.5 799.7 289.7 805.6 293.0 C811.5 296.3 818.1 300.9 823.2 305.1 C828.3 309.3 832.0 313.0 836.4 318.3 C840.8 323.6 845.9 330.6 849.6 337.0 C853.3 343.4 856.0 349.8 858.4 356.8 C860.8 363.8 862.8 371.6 864.0 378.8 C865.2 386.0 865.8 393.0 865.6 400.0 C865.4 407.0 864.2 412.2 862.6 421.0 C861.0 429.8 859.5 442.1 856.3 452.7 C853.1 463.3 848.4 474.4 843.6 484.4 C838.9 494.4 833.6 503.9 827.8 512.8 C822.0 521.7 815.1 530.6 808.8 538.0 C802.5 545.4 795.6 552.8 789.8 557.0 C784.0 561.2 779.3 561.9 774.0 563.4 C768.7 564.9 762.9 566.0 758.2 566.0 C753.5 566.0 750.4 564.3 745.6 563.4 C740.9 562.5 734.0 560.6 729.7 560.6 C725.4 560.6 722.6 562.2 720.0 563.2 C717.4 564.2 716.8 565.0 713.9 566.5 C711.0 568.0 706.2 570.8 702.9 572.0 C699.6 573.2 697.0 574.0 694.0 573.8 C691.0 573.6 688.5 572.4 685.2 571.0 C681.9 569.6 677.5 567.0 674.2 565.4 C670.9 563.8 668.3 562.0 665.4 561.5 C662.5 561.0 659.5 561.8 656.6 562.1 C653.7 562.4 650.4 563.6 647.8 563.2 C645.2 562.9 644.1 561.8 641.2 560.0 C638.3 558.2 634.2 555.3 630.2 552.2 C626.2 549.1 621.4 545.2 617.0 541.2 C612.6 537.2 608.0 532.8 603.8 528.0 C599.6 523.2 595.6 518.1 591.7 512.6 C587.9 507.1 584.0 500.9 580.7 495.0 C577.4 489.1 574.5 483.6 571.9 477.4 C569.3 471.2 567.0 464.2 565.3 457.6 C563.6 451.0 562.5 444.6 561.5 438.0 C560.5 431.4 559.9 426.1 559.0 418.0 C558.1 409.9 556.4 397.1 556.4 389.5Z" fill="url(#apside)"/>
    <ellipse cx="815" cy="332" rx="95" ry="85" fill="url(#rgDark)"/>
    <ellipse cx="806" cy="300" rx="26" ry="6" fill="#c89098" opacity="0.3" filter="url(#b3)" transform="rotate(32 806 300)"/>
    <!-- glossy highlights -->
    <ellipse cx="628" cy="378" rx="78" ry="95" fill="url(#rgL1)"/>
    <ellipse cx="700" cy="425" rx="100" ry="115" fill="url(#rgL2)"/>
    <ellipse cx="646" cy="383" rx="22" ry="15" fill="#ffd5cc" opacity="0.75" filter="url(#b6)"/>
    <ellipse cx="648" cy="381" rx="10" ry="7" fill="#ffffff" opacity="0.85" filter="url(#b3)"/>
    <ellipse cx="598" cy="332" rx="30" ry="11" fill="#f07060" opacity="0.4" filter="url(#b6)" transform="rotate(-35 598 332)"/>
    <g fill="#f07c68"><circle cx="657.8" cy="339.2" r="1.12" fill-opacity="0.28"/><circle cx="721.8" cy="395.1" r="0.74" fill-opacity="0.45"/><circle cx="571.3" cy="412.7" r="0.75" fill-opacity="0.29"/><circle cx="688.2" cy="515.0" r="0.78" fill-opacity="0.34"/><circle cx="749.5" cy="546.4" r="1.08" fill-opacity="0.41"/><circle cx="819.3" cy="375.3" r="0.79" fill-opacity="0.30"/><circle cx="653.2" cy="512.2" r="0.82" fill-opacity="0.48"/><circle cx="753.0" cy="396.8" r="1.06" fill-opacity="0.28"/><circle cx="765.5" cy="411.2" r="0.90" fill-opacity="0.48"/><circle cx="696.9" cy="377.9" r="1.22" fill-opacity="0.53"/><circle cx="633.7" cy="449.4" r="1.04" fill-opacity="0.60"/><circle cx="780.3" cy="374.9" r="1.34" fill-opacity="0.30"/><circle cx="686.3" cy="496.9" r="0.80" fill-opacity="0.45"/><circle cx="790.9" cy="449.0" r="1.27" fill-opacity="0.38"/><circle cx="770.0" cy="454.5" r="1.08" fill-opacity="0.43"/><circle cx="703.2" cy="472.7" r="0.74" fill-opacity="0.53"/><circle cx="808.2" cy="374.0" r="0.95" fill-opacity="0.52"/><circle cx="566.8" cy="420.0" r="0.81" fill-opacity="0.30"/><circle cx="599.1" cy="364.4" r="0.95" fill-opacity="0.60"/><circle cx="584.3" cy="416.8" r="1.06" fill-opacity="0.60"/><circle cx="644.1" cy="408.0" r="0.93" fill-opacity="0.60"/><circle cx="613.2" cy="360.3" r="0.85" fill-opacity="0.44"/><circle cx="737.9" cy="368.3" r="0.70" fill-opacity="0.42"/><circle cx="671.5" cy="447.2" r="1.32" fill-opacity="0.53"/><circle cx="715.7" cy="460.6" r="1.14" fill-opacity="0.27"/><circle cx="824.1" cy="507.4" r="0.96" fill-opacity="0.41"/><circle cx="591.3" cy="464.9" r="0.74" fill-opacity="0.28"/><circle cx="623.0" cy="342.2" r="0.92" fill-opacity="0.27"/><circle cx="590.6" cy="394.5" r="0.72" fill-opacity="0.60"/><circle cx="745.4" cy="338.6" r="0.86" fill-opacity="0.39"/><circle cx="670.0" cy="331.9" r="1.25" fill-opacity="0.65"/><circle cx="700.7" cy="425.8" r="0.76" fill-opacity="0.29"/><circle cx="663.5" cy="368.8" r="1.24" fill-opacity="0.31"/><circle cx="719.5" cy="338.1" r="1.05" fill-opacity="0.26"/><circle cx="719.5" cy="554.4" r="1.26" fill-opacity="0.53"/><circle cx="638.9" cy="395.3" r="0.81" fill-opacity="0.56"/><circle cx="720.8" cy="502.6" r="0.91" fill-opacity="0.34"/><circle cx="817.5" cy="509.6" r="1.23" fill-opacity="0.55"/><circle cx="628.5" cy="434.6" r="0.93" fill-opacity="0.26"/><circle cx="638.3" cy="480.1" r="1.32" fill-opacity="0.43"/><circle cx="848.4" cy="394.8" r="0.84" fill-opacity="0.34"/><circle cx="619.4" cy="353.1" r="1.11" fill-opacity="0.61"/><circle cx="813.8" cy="424.7" r="1.12" fill-opacity="0.57"/><circle cx="585.6" cy="471.8" r="1.29" fill-opacity="0.56"/><circle cx="786.5" cy="424.3" r="0.82" fill-opacity="0.57"/><circle cx="660.4" cy="508.2" r="1.33" fill-opacity="0.41"/><circle cx="681.2" cy="546.2" r="1.17" fill-opacity="0.32"/><circle cx="665.8" cy="442.7" r="0.79" fill-opacity="0.26"/><circle cx="719.0" cy="542.7" r="0.98" fill-opacity="0.60"/><circle cx="809.5" cy="354.9" r="0.86" fill-opacity="0.37"/><circle cx="632.6" cy="452.5" r="0.87" fill-opacity="0.42"/><circle cx="666.8" cy="419.1" r="1.08" fill-opacity="0.61"/><circle cx="687.0" cy="538.6" r="1.03" fill-opacity="0.46"/><circle cx="692.9" cy="347.6" r="0.70" fill-opacity="0.57"/><circle cx="612.0" cy="423.1" r="1.17" fill-opacity="0.47"/><circle cx="658.4" cy="434.8" r="1.06" fill-opacity="0.56"/><circle cx="592.0" cy="445.7" r="0.86" fill-opacity="0.36"/><circle cx="793.2" cy="432.0" r="1.07" fill-opacity="0.55"/><circle cx="835.6" cy="415.2" r="1.10" fill-opacity="0.45"/><circle cx="714.7" cy="480.1" r="0.99" fill-opacity="0.46"/><circle cx="704.4" cy="544.8" r="1.15" fill-opacity="0.60"/><circle cx="729.0" cy="545.2" r="1.25" fill-opacity="0.30"/><circle cx="596.7" cy="415.0" r="0.75" fill-opacity="0.35"/><circle cx="582.1" cy="474.1" r="1.21" fill-opacity="0.61"/><circle cx="606.6" cy="486.2" r="1.13" fill-opacity="0.31"/><circle cx="680.3" cy="426.7" r="1.34" fill-opacity="0.58"/><circle cx="608.8" cy="412.2" r="1.04" fill-opacity="0.39"/><circle cx="619.1" cy="382.8" r="1.17" fill-opacity="0.26"/><circle cx="727.3" cy="414.5" r="0.71" fill-opacity="0.38"/><circle cx="748.4" cy="433.2" r="0.74" fill-opacity="0.64"/><circle cx="591.6" cy="369.0" r="0.73" fill-opacity="0.56"/><circle cx="641.7" cy="333.7" r="0.97" fill-opacity="0.61"/><circle cx="807.3" cy="367.2" r="0.80" fill-opacity="0.62"/><circle cx="732.3" cy="482.1" r="0.76" fill-opacity="0.27"/><circle cx="767.8" cy="410.6" r="0.75" fill-opacity="0.63"/><circle cx="751.6" cy="508.4" r="0.75" fill-opacity="0.59"/><circle cx="697.0" cy="388.2" r="1.06" fill-opacity="0.62"/><circle cx="640.9" cy="333.6" r="1.04" fill-opacity="0.35"/><circle cx="654.2" cy="379.3" r="1.19" fill-opacity="0.37"/><circle cx="711.0" cy="346.3" r="0.93" fill-opacity="0.26"/><circle cx="781.4" cy="443.3" r="0.82" fill-opacity="0.44"/><circle cx="807.3" cy="412.4" r="1.02" fill-opacity="0.58"/><circle cx="678.7" cy="431.7" r="1.15" fill-opacity="0.64"/><circle cx="663.5" cy="516.4" r="1.16" fill-opacity="0.50"/><circle cx="682.2" cy="390.4" r="0.74" fill-opacity="0.30"/><circle cx="637.2" cy="342.4" r="0.75" fill-opacity="0.59"/><circle cx="822.9" cy="474.3" r="0.88" fill-opacity="0.35"/><circle cx="648.5" cy="419.5" r="0.80" fill-opacity="0.43"/><circle cx="853.7" cy="442.2" r="0.86" fill-opacity="0.64"/><circle cx="653.5" cy="392.7" r="0.70" fill-opacity="0.40"/><circle cx="703.3" cy="430.7" r="0.83" fill-opacity="0.45"/><circle cx="587.1" cy="403.9" r="0.73" fill-opacity="0.26"/><circle cx="651.9" cy="360.5" r="1.08" fill-opacity="0.46"/><circle cx="786.7" cy="471.0" r="1.17" fill-opacity="0.60"/><circle cx="677.6" cy="384.8" r="1.34" fill-opacity="0.31"/><circle cx="778.7" cy="467.2" r="0.73" fill-opacity="0.58"/><circle cx="829.4" cy="463.1" r="1.18" fill-opacity="0.57"/><circle cx="602.1" cy="436.2" r="1.03" fill-opacity="0.58"/><circle cx="803.0" cy="514.9" r="1.08" fill-opacity="0.61"/><circle cx="766.2" cy="480.3" r="0.85" fill-opacity="0.26"/><circle cx="600.2" cy="393.8" r="0.77" fill-opacity="0.58"/><circle cx="728.7" cy="463.2" r="1.11" fill-opacity="0.52"/><circle cx="800.9" cy="494.5" r="1.03" fill-opacity="0.46"/><circle cx="782.5" cy="365.6" r="0.75" fill-opacity="0.36"/><circle cx="780.3" cy="353.4" r="1.18" fill-opacity="0.64"/><circle cx="709.2" cy="399.5" r="1.01" fill-opacity="0.52"/><circle cx="791.6" cy="460.4" r="1.12" fill-opacity="0.28"/><circle cx="604.5" cy="366.0" r="1.18" fill-opacity="0.37"/><circle cx="762.9" cy="480.0" r="1.14" fill-opacity="0.37"/><circle cx="716.0" cy="420.8" r="1.00" fill-opacity="0.30"/><circle cx="829.9" cy="351.8" r="1.34" fill-opacity="0.62"/><circle cx="695.7" cy="369.9" r="0.84" fill-opacity="0.63"/><circle cx="623.6" cy="451.2" r="0.79" fill-opacity="0.46"/><circle cx="807.7" cy="432.3" r="1.28" fill-opacity="0.53"/><circle cx="629.9" cy="533.4" r="1.02" fill-opacity="0.26"/><circle cx="696.1" cy="378.5" r="0.79" fill-opacity="0.39"/><circle cx="655.5" cy="518.5" r="0.70" fill-opacity="0.55"/><circle cx="813.4" cy="331.2" r="1.30" fill-opacity="0.54"/><circle cx="832.3" cy="375.4" r="0.94" fill-opacity="0.41"/><circle cx="668.9" cy="411.3" r="0.88" fill-opacity="0.27"/><circle cx="646.3" cy="543.3" r="0.86" fill-opacity="0.36"/><circle cx="714.3" cy="349.4" r="0.94" fill-opacity="0.63"/><circle cx="750.5" cy="537.5" r="1.31" fill-opacity="0.47"/><circle cx="781.2" cy="417.2" r="1.19" fill-opacity="0.51"/><circle cx="702.6" cy="389.4" r="0.89" fill-opacity="0.55"/><circle cx="758.1" cy="378.2" r="1.06" fill-opacity="0.41"/><circle cx="610.5" cy="342.0" r="0.84" fill-opacity="0.61"/><circle cx="710.1" cy="357.2" r="1.29" fill-opacity="0.65"/><circle cx="695.9" cy="336.3" r="0.83" fill-opacity="0.29"/><circle cx="663.3" cy="323.7" r="0.86" fill-opacity="0.35"/><circle cx="732.0" cy="530.7" r="1.19" fill-opacity="0.42"/><circle cx="685.0" cy="436.3" r="0.94" fill-opacity="0.39"/><circle cx="578.7" cy="372.2" r="1.33" fill-opacity="0.30"/><circle cx="712.0" cy="463.7" r="1.26" fill-opacity="0.34"/><circle cx="641.8" cy="364.6" r="0.96" fill-opacity="0.43"/><circle cx="830.5" cy="423.0" r="1.08" fill-opacity="0.25"/><circle cx="678.2" cy="541.0" r="1.24" fill-opacity="0.59"/><circle cx="717.8" cy="477.3" r="1.31" fill-opacity="0.54"/><circle cx="755.5" cy="498.8" r="1.00" fill-opacity="0.47"/><circle cx="754.9" cy="379.0" r="0.78" fill-opacity="0.35"/><circle cx="752.2" cy="481.6" r="0.77" fill-opacity="0.28"/><circle cx="718.4" cy="451.6" r="0.95" fill-opacity="0.34"/><circle cx="651.1" cy="419.8" r="1.32" fill-opacity="0.51"/><circle cx="826.9" cy="423.6" r="0.85" fill-opacity="0.35"/><circle cx="710.5" cy="475.4" r="0.97" fill-opacity="0.35"/><circle cx="761.5" cy="540.5" r="0.85" fill-opacity="0.26"/><circle cx="662.1" cy="409.3" r="1.14" fill-opacity="0.33"/><circle cx="800.7" cy="492.2" r="1.03" fill-opacity="0.33"/><circle cx="807.6" cy="360.0" r="0.84" fill-opacity="0.55"/><circle cx="709.7" cy="348.7" r="0.85" fill-opacity="0.42"/><circle cx="760.9" cy="546.7" r="0.80" fill-opacity="0.41"/><circle cx="578.2" cy="402.3" r="1.28" fill-opacity="0.60"/><circle cx="841.3" cy="385.6" r="0.82" fill-opacity="0.62"/><circle cx="760.7" cy="398.4" r="0.94" fill-opacity="0.38"/><circle cx="644.5" cy="391.4" r="1.32" fill-opacity="0.30"/><circle cx="667.7" cy="513.6" r="1.23" fill-opacity="0.42"/><circle cx="574.9" cy="423.1" r="0.94" fill-opacity="0.62"/><circle cx="618.3" cy="394.7" r="1.28" fill-opacity="0.26"/><circle cx="684.1" cy="511.1" r="1.20" fill-opacity="0.27"/><circle cx="837.9" cy="366.8" r="1.19" fill-opacity="0.61"/><circle cx="662.4" cy="370.8" r="1.32" fill-opacity="0.50"/><circle cx="639.2" cy="486.3" r="0.91" fill-opacity="0.36"/><circle cx="836.8" cy="464.8" r="1.31" fill-opacity="0.26"/><circle cx="630.6" cy="423.5" r="1.32" fill-opacity="0.63"/><circle cx="676.7" cy="365.3" r="0.98" fill-opacity="0.45"/><circle cx="802.4" cy="492.0" r="1.23" fill-opacity="0.56"/><circle cx="743.4" cy="385.2" r="0.91" fill-opacity="0.39"/><circle cx="796.2" cy="320.5" r="0.83" fill-opacity="0.55"/><circle cx="634.7" cy="316.8" r="0.72" fill-opacity="0.47"/><circle cx="640.0" cy="321.9" r="0.76" fill-opacity="0.45"/><circle cx="774.4" cy="416.2" r="0.85" fill-opacity="0.42"/><circle cx="747.3" cy="475.3" r="1.19" fill-opacity="0.59"/><circle cx="760.7" cy="331.5" r="1.25" fill-opacity="0.37"/><circle cx="731.2" cy="397.0" r="1.18" fill-opacity="0.33"/><circle cx="634.7" cy="363.8" r="0.80" fill-opacity="0.60"/><circle cx="734.6" cy="384.8" r="0.96" fill-opacity="0.65"/><circle cx="713.2" cy="360.2" r="1.23" fill-opacity="0.51"/><circle cx="703.4" cy="513.0" r="1.25" fill-opacity="0.62"/><circle cx="596.0" cy="349.3" r="1.33" fill-opacity="0.48"/><circle cx="840.9" cy="396.8" r="1.26" fill-opacity="0.43"/><circle cx="638.5" cy="502.2" r="1.31" fill-opacity="0.29"/><circle cx="740.0" cy="461.2" r="0.84" fill-opacity="0.40"/><circle cx="602.7" cy="353.0" r="0.87" fill-opacity="0.49"/><circle cx="756.8" cy="352.9" r="0.71" fill-opacity="0.38"/><circle cx="764.9" cy="348.1" r="0.90" fill-opacity="0.33"/><circle cx="800.2" cy="442.5" r="0.74" fill-opacity="0.29"/><circle cx="679.4" cy="443.0" r="1.12" fill-opacity="0.29"/><circle cx="609.4" cy="480.8" r="0.97" fill-opacity="0.36"/><circle cx="654.3" cy="447.3" r="0.93" fill-opacity="0.42"/><circle cx="669.9" cy="351.3" r="1.17" fill-opacity="0.33"/><circle cx="688.0" cy="513.3" r="0.96" fill-opacity="0.60"/><circle cx="699.2" cy="342.3" r="0.71" fill-opacity="0.47"/><circle cx="753.5" cy="536.5" r="0.76" fill-opacity="0.50"/><circle cx="672.0" cy="431.2" r="0.79" fill-opacity="0.36"/><circle cx="717.4" cy="540.6" r="0.77" fill-opacity="0.45"/><circle cx="619.6" cy="332.9" r="1.31" fill-opacity="0.64"/><circle cx="839.7" cy="400.9" r="1.29" fill-opacity="0.50"/><circle cx="809.0" cy="341.7" r="1.21" fill-opacity="0.34"/><circle cx="682.2" cy="520.1" r="1.24" fill-opacity="0.32"/><circle cx="625.9" cy="403.9" r="1.04" fill-opacity="0.40"/><circle cx="597.2" cy="364.2" r="1.17" fill-opacity="0.61"/><circle cx="572.4" cy="446.2" r="1.19" fill-opacity="0.27"/><circle cx="741.1" cy="443.0" r="1.11" fill-opacity="0.37"/><circle cx="686.9" cy="451.5" r="0.98" fill-opacity="0.51"/><circle cx="694.9" cy="414.0" r="0.72" fill-opacity="0.50"/><circle cx="707.8" cy="361.2" r="1.20" fill-opacity="0.56"/><circle cx="698.4" cy="346.7" r="1.01" fill-opacity="0.29"/><circle cx="598.8" cy="412.0" r="0.76" fill-opacity="0.43"/><circle cx="752.2" cy="321.4" r="1.18" fill-opacity="0.56"/><circle cx="712.2" cy="398.2" r="1.32" fill-opacity="0.30"/><circle cx="781.1" cy="511.9" r="0.83" fill-opacity="0.64"/><circle cx="708.5" cy="548.7" r="1.30" fill-opacity="0.32"/><circle cx="579.8" cy="391.2" r="1.19" fill-opacity="0.31"/><circle cx="830.8" cy="371.5" r="1.23" fill-opacity="0.31"/><circle cx="711.7" cy="539.2" r="0.84" fill-opacity="0.36"/><circle cx="712.8" cy="383.0" r="0.72" fill-opacity="0.32"/><circle cx="765.3" cy="532.8" r="0.81" fill-opacity="0.56"/><circle cx="594.8" cy="438.0" r="1.11" fill-opacity="0.39"/><circle cx="823.6" cy="444.3" r="1.08" fill-opacity="0.60"/><circle cx="750.2" cy="402.5" r="1.22" fill-opacity="0.36"/><circle cx="668.8" cy="498.8" r="0.99" fill-opacity="0.32"/><circle cx="807.6" cy="365.9" r="1.12" fill-opacity="0.64"/><circle cx="736.9" cy="472.6" r="0.90" fill-opacity="0.25"/><circle cx="746.0" cy="412.4" r="1.03" fill-opacity="0.61"/><circle cx="599.9" cy="359.1" r="1.12" fill-opacity="0.26"/><circle cx="592.1" cy="392.9" r="0.85" fill-opacity="0.48"/><circle cx="737.9" cy="353.1" r="1.11" fill-opacity="0.44"/><circle cx="633.6" cy="338.8" r="0.76" fill-opacity="0.51"/><circle cx="823.1" cy="503.4" r="0.96" fill-opacity="0.36"/><circle cx="729.8" cy="391.1" r="1.12" fill-opacity="0.43"/><circle cx="635.0" cy="534.9" r="0.73" fill-opacity="0.46"/><circle cx="682.6" cy="361.8" r="0.74" fill-opacity="0.56"/><circle cx="620.3" cy="458.1" r="1.03" fill-opacity="0.51"/><circle cx="805.6" cy="345.4" r="0.90" fill-opacity="0.37"/><circle cx="796.5" cy="486.0" r="0.70" fill-opacity="0.59"/><circle cx="785.0" cy="421.0" r="1.18" fill-opacity="0.43"/><circle cx="628.2" cy="327.4" r="0.85" fill-opacity="0.27"/><circle cx="661.3" cy="494.9" r="1.15" fill-opacity="0.59"/><circle cx="774.9" cy="369.2" r="1.06" fill-opacity="0.42"/><circle cx="798.1" cy="436.0" r="0.87" fill-opacity="0.51"/><circle cx="638.6" cy="361.4" r="1.18" fill-opacity="0.63"/><circle cx="785.3" cy="385.0" r="1.27" fill-opacity="0.38"/><circle cx="632.2" cy="536.0" r="1.11" fill-opacity="0.53"/><circle cx="701.8" cy="518.3" r="1.15" fill-opacity="0.59"/><circle cx="692.0" cy="488.4" r="1.07" fill-opacity="0.37"/><circle cx="624.0" cy="461.9" r="0.75" fill-opacity="0.61"/><circle cx="664.1" cy="336.9" r="0.72" fill-opacity="0.27"/><circle cx="769.2" cy="464.8" r="1.15" fill-opacity="0.54"/><circle cx="579.9" cy="453.5" r="0.94" fill-opacity="0.58"/><circle cx="592.3" cy="353.5" r="0.77" fill-opacity="0.26"/><circle cx="816.0" cy="511.1" r="1.11" fill-opacity="0.58"/><circle cx="750.7" cy="374.7" r="0.76" fill-opacity="0.29"/><circle cx="788.7" cy="353.3" r="0.91" fill-opacity="0.42"/><circle cx="645.3" cy="486.1" r="0.94" fill-opacity="0.38"/><circle cx="851.1" cy="431.0" r="1.25" fill-opacity="0.50"/><circle cx="569.4" cy="407.4" r="0.98" fill-opacity="0.56"/><circle cx="664.7" cy="483.2" r="1.05" fill-opacity="0.34"/><circle cx="807.6" cy="344.3" r="0.70" fill-opacity="0.33"/><circle cx="708.4" cy="507.2" r="0.82" fill-opacity="0.45"/><circle cx="664.9" cy="516.3" r="0.87" fill-opacity="0.63"/><circle cx="645.7" cy="355.8" r="1.15" fill-opacity="0.45"/><circle cx="593.2" cy="465.5" r="0.75" fill-opacity="0.57"/><circle cx="770.5" cy="504.6" r="1.11" fill-opacity="0.39"/><circle cx="681.2" cy="402.6" r="1.28" fill-opacity="0.28"/><circle cx="622.2" cy="368.4" r="1.29" fill-opacity="0.45"/><circle cx="674.6" cy="529.8" r="0.85" fill-opacity="0.43"/><circle cx="720.5" cy="496.2" r="1.19" fill-opacity="0.51"/><circle cx="665.2" cy="384.9" r="0.80" fill-opacity="0.59"/><circle cx="760.0" cy="492.9" r="0.81" fill-opacity="0.43"/><circle cx="793.6" cy="450.6" r="0.78" fill-opacity="0.43"/><circle cx="827.3" cy="361.9" r="0.82" fill-opacity="0.37"/><circle cx="772.4" cy="519.4" r="0.80" fill-opacity="0.31"/><circle cx="634.8" cy="384.9" r="1.04" fill-opacity="0.31"/><circle cx="659.1" cy="349.2" r="1.33" fill-opacity="0.54"/><circle cx="590.7" cy="399.9" r="1.34" fill-opacity="0.57"/><circle cx="781.5" cy="413.1" r="0.83" fill-opacity="0.51"/><circle cx="592.3" cy="353.7" r="0.95" fill-opacity="0.26"/><circle cx="680.5" cy="505.7" r="1.15" fill-opacity="0.45"/><circle cx="751.0" cy="420.5" r="0.79" fill-opacity="0.49"/><circle cx="682.2" cy="492.6" r="1.29" fill-opacity="0.42"/><circle cx="733.3" cy="494.8" r="0.97" fill-opacity="0.34"/><circle cx="778.1" cy="528.8" r="1.20" fill-opacity="0.53"/><circle cx="817.4" cy="476.7" r="1.12" fill-opacity="0.43"/><circle cx="654.5" cy="463.4" r="0.76" fill-opacity="0.42"/><circle cx="796.3" cy="485.4" r="1.11" fill-opacity="0.35"/><circle cx="687.9" cy="418.4" r="1.10" fill-opacity="0.41"/><circle cx="763.9" cy="541.9" r="0.82" fill-opacity="0.51"/><circle cx="795.0" cy="401.1" r="1.02" fill-opacity="0.64"/><circle cx="571.5" cy="441.3" r="0.80" fill-opacity="0.56"/><circle cx="844.1" cy="435.0" r="0.77" fill-opacity="0.48"/><circle cx="723.4" cy="486.5" r="1.03" fill-opacity="0.51"/><circle cx="810.4" cy="435.6" r="0.97" fill-opacity="0.63"/><circle cx="623.4" cy="477.9" r="0.96" fill-opacity="0.56"/><circle cx="642.9" cy="403.9" r="0.71" fill-opacity="0.42"/><circle cx="687.0" cy="481.5" r="0.93" fill-opacity="0.36"/><circle cx="627.8" cy="492.8" r="1.31" fill-opacity="0.46"/><circle cx="626.1" cy="508.4" r="0.95" fill-opacity="0.33"/><circle cx="599.0" cy="501.9" r="1.23" fill-opacity="0.50"/><circle cx="701.7" cy="446.1" r="0.85" fill-opacity="0.64"/><circle cx="666.6" cy="466.1" r="1.23" fill-opacity="0.58"/><circle cx="701.4" cy="376.5" r="1.06" fill-opacity="0.30"/><circle cx="811.8" cy="392.2" r="1.25" fill-opacity="0.36"/><circle cx="673.6" cy="365.9" r="0.98" fill-opacity="0.32"/><circle cx="644.9" cy="363.7" r="0.90" fill-opacity="0.44"/><circle cx="689.4" cy="465.7" r="1.13" fill-opacity="0.39"/><circle cx="758.1" cy="365.0" r="0.77" fill-opacity="0.31"/><circle cx="630.6" cy="501.8" r="0.93" fill-opacity="0.31"/><circle cx="743.7" cy="503.1" r="1.13" fill-opacity="0.61"/><circle cx="798.0" cy="518.1" r="0.83" fill-opacity="0.53"/><circle cx="720.3" cy="492.9" r="0.99" fill-opacity="0.60"/><circle cx="727.6" cy="368.8" r="0.85" fill-opacity="0.31"/><circle cx="701.1" cy="337.5" r="1.02" fill-opacity="0.45"/><circle cx="722.9" cy="524.3" r="0.70" fill-opacity="0.59"/><circle cx="701.3" cy="446.3" r="1.13" fill-opacity="0.59"/><circle cx="673.2" cy="408.9" r="1.32" fill-opacity="0.28"/><circle cx="752.4" cy="465.4" r="0.72" fill-opacity="0.49"/><circle cx="766.1" cy="542.2" r="0.91" fill-opacity="0.64"/><circle cx="714.2" cy="426.0" r="1.28" fill-opacity="0.26"/><circle cx="776.9" cy="462.6" r="0.92" fill-opacity="0.59"/><circle cx="670.6" cy="423.4" r="1.04" fill-opacity="0.56"/><circle cx="623.6" cy="413.1" r="0.97" fill-opacity="0.47"/><circle cx="809.7" cy="376.1" r="1.24" fill-opacity="0.41"/><circle cx="712.1" cy="370.6" r="1.03" fill-opacity="0.64"/><circle cx="757.7" cy="505.9" r="0.92" fill-opacity="0.38"/><circle cx="650.4" cy="452.5" r="1.11" fill-opacity="0.56"/><circle cx="827.5" cy="441.8" r="0.73" fill-opacity="0.37"/><circle cx="838.3" cy="458.3" r="1.13" fill-opacity="0.57"/><circle cx="834.8" cy="459.1" r="1.10" fill-opacity="0.50"/><circle cx="770.3" cy="455.0" r="1.14" fill-opacity="0.34"/><circle cx="761.4" cy="419.0" r="1.20" fill-opacity="0.29"/><circle cx="758.0" cy="395.9" r="1.23" fill-opacity="0.56"/><circle cx="729.8" cy="367.1" r="0.90" fill-opacity="0.42"/><circle cx="656.2" cy="412.0" r="1.12" fill-opacity="0.62"/><circle cx="576.5" cy="447.6" r="0.73" fill-opacity="0.30"/><circle cx="804.7" cy="449.6" r="1.30" fill-opacity="0.43"/><circle cx="738.8" cy="543.8" r="1.34" fill-opacity="0.44"/><circle cx="684.5" cy="326.5" r="1.12" fill-opacity="0.33"/><circle cx="777.2" cy="363.0" r="1.18" fill-opacity="0.32"/><circle cx="775.5" cy="522.4" r="1.17" fill-opacity="0.28"/><circle cx="749.8" cy="484.4" r="1.00" fill-opacity="0.62"/><circle cx="653.9" cy="489.7" r="0.81" fill-opacity="0.59"/><circle cx="671.0" cy="449.5" r="0.99" fill-opacity="0.52"/><circle cx="603.8" cy="507.3" r="0.94" fill-opacity="0.51"/><circle cx="750.2" cy="408.7" r="0.95" fill-opacity="0.56"/><circle cx="731.2" cy="376.0" r="0.74" fill-opacity="0.64"/><circle cx="772.4" cy="515.1" r="0.92" fill-opacity="0.49"/><circle cx="741.5" cy="380.2" r="0.98" fill-opacity="0.61"/><circle cx="673.8" cy="478.1" r="1.09" fill-opacity="0.61"/><circle cx="803.9" cy="373.7" r="0.70" fill-opacity="0.36"/><circle cx="687.6" cy="452.5" r="1.23" fill-opacity="0.60"/><circle cx="805.1" cy="525.5" r="1.07" fill-opacity="0.36"/><circle cx="817.1" cy="509.8" r="1.15" fill-opacity="0.62"/><circle cx="664.7" cy="322.1" r="1.06" fill-opacity="0.57"/><circle cx="620.5" cy="495.0" r="1.31" fill-opacity="0.34"/><circle cx="743.3" cy="476.2" r="1.00" fill-opacity="0.33"/><circle cx="636.9" cy="495.3" r="1.21" fill-opacity="0.43"/><circle cx="793.2" cy="360.5" r="1.08" fill-opacity="0.61"/><circle cx="827.3" cy="435.7" r="1.01" fill-opacity="0.49"/><circle cx="617.1" cy="350.0" r="0.82" fill-opacity="0.53"/><circle cx="669.6" cy="446.8" r="0.96" fill-opacity="0.46"/><circle cx="592.0" cy="464.5" r="1.21" fill-opacity="0.31"/><circle cx="740.4" cy="389.7" r="1.04" fill-opacity="0.26"/><circle cx="821.6" cy="426.4" r="1.07" fill-opacity="0.35"/><circle cx="795.3" cy="410.7" r="1.32" fill-opacity="0.56"/><circle cx="620.7" cy="347.0" r="0.75" fill-opacity="0.27"/><circle cx="728.3" cy="526.4" r="1.00" fill-opacity="0.63"/><circle cx="740.6" cy="403.3" r="0.78" fill-opacity="0.63"/><circle cx="637.7" cy="446.8" r="1.12" fill-opacity="0.63"/><circle cx="762.3" cy="402.2" r="0.99" fill-opacity="0.31"/><circle cx="637.3" cy="391.5" r="1.29" fill-opacity="0.61"/><circle cx="797.5" cy="484.5" r="1.12" fill-opacity="0.64"/><circle cx="764.4" cy="377.7" r="1.08" fill-opacity="0.55"/><circle cx="591.8" cy="384.2" r="0.87" fill-opacity="0.30"/><circle cx="705.4" cy="343.8" r="0.85" fill-opacity="0.31"/><circle cx="776.6" cy="350.7" r="0.72" fill-opacity="0.62"/><circle cx="602.2" cy="416.3" r="0.76" fill-opacity="0.62"/><circle cx="814.4" cy="463.4" r="0.99" fill-opacity="0.39"/><circle cx="808.6" cy="424.2" r="1.11" fill-opacity="0.31"/><circle cx="775.5" cy="443.9" r="0.79" fill-opacity="0.60"/><circle cx="640.5" cy="407.1" r="0.80" fill-opacity="0.36"/><circle cx="813.5" cy="387.0" r="0.81" fill-opacity="0.45"/><circle cx="656.1" cy="534.8" r="0.77" fill-opacity="0.64"/><circle cx="761.8" cy="354.9" r="1.01" fill-opacity="0.36"/><circle cx="637.9" cy="352.4" r="0.94" fill-opacity="0.65"/><circle cx="589.5" cy="375.3" r="1.28" fill-opacity="0.27"/><circle cx="779.4" cy="376.3" r="1.34" fill-opacity="0.26"/><circle cx="803.7" cy="388.6" r="0.79" fill-opacity="0.25"/><circle cx="811.3" cy="436.9" r="0.82" fill-opacity="0.42"/><circle cx="732.5" cy="335.9" r="0.82" fill-opacity="0.56"/><circle cx="774.9" cy="351.1" r="0.75" fill-opacity="0.28"/><circle cx="743.8" cy="428.8" r="0.88" fill-opacity="0.33"/><circle cx="745.0" cy="484.0" r="1.23" fill-opacity="0.48"/><circle cx="781.3" cy="406.1" r="1.17" fill-opacity="0.27"/><circle cx="804.8" cy="387.2" r="1.25" fill-opacity="0.60"/><circle cx="834.9" cy="423.9" r="1.27" fill-opacity="0.36"/><circle cx="616.2" cy="516.2" r="0.94" fill-opacity="0.32"/><circle cx="672.1" cy="454.7" r="0.70" fill-opacity="0.46"/><circle cx="694.6" cy="434.1" r="0.78" fill-opacity="0.54"/><circle cx="656.9" cy="484.9" r="0.95" fill-opacity="0.55"/><circle cx="848.1" cy="428.6" r="1.03" fill-opacity="0.46"/><circle cx="615.1" cy="326.7" r="0.86" fill-opacity="0.58"/><circle cx="771.1" cy="350.7" r="0.71" fill-opacity="0.49"/><circle cx="734.1" cy="436.0" r="1.16" fill-opacity="0.29"/><circle cx="822.6" cy="486.4" r="0.73" fill-opacity="0.30"/><circle cx="709.1" cy="430.2" r="0.88" fill-opacity="0.30"/><circle cx="682.5" cy="335.6" r="1.08" fill-opacity="0.59"/><circle cx="604.5" cy="448.9" r="1.19" fill-opacity="0.32"/><circle cx="677.4" cy="409.3" r="1.25" fill-opacity="0.46"/><circle cx="679.5" cy="544.7" r="1.20" fill-opacity="0.39"/><circle cx="632.6" cy="387.1" r="0.98" fill-opacity="0.64"/><circle cx="806.1" cy="520.4" r="0.73" fill-opacity="0.46"/><circle cx="635.3" cy="409.8" r="1.11" fill-opacity="0.40"/><circle cx="720.3" cy="318.0" r="0.98" fill-opacity="0.45"/><circle cx="843.0" cy="464.6" r="1.23" fill-opacity="0.60"/><circle cx="753.8" cy="369.1" r="1.14" fill-opacity="0.36"/><circle cx="723.8" cy="540.3" r="1.10" fill-opacity="0.35"/><circle cx="717.1" cy="412.8" r="1.32" fill-opacity="0.37"/><circle cx="652.2" cy="468.4" r="0.78" fill-opacity="0.49"/><circle cx="848.7" cy="433.6" r="0.87" fill-opacity="0.44"/><circle cx="721.2" cy="338.6" r="0.78" fill-opacity="0.30"/></g>
    <!-- top cavity -->
    <path d="M612.0 297.0 C611.2 298.8 623.7 298.7 630.0 299.5 C636.3 300.3 643.3 301.0 650.0 302.0 C656.7 303.0 663.7 304.7 670.0 305.5 C676.3 306.3 682.2 306.8 688.0 307.0 C693.8 307.2 698.8 307.0 705.0 306.5 C711.2 306.0 718.3 305.2 725.0 304.0 C731.7 302.8 738.8 301.1 745.0 299.5 C751.2 297.9 756.2 295.9 762.0 294.5 C767.8 293.1 772.8 290.8 780.0 291.0 C787.2 291.2 802.8 296.6 805.0 296.0 C807.2 295.4 799.5 290.0 793.0 287.3 C786.5 284.6 774.4 281.5 766.0 279.8 C757.6 278.1 751.6 277.8 742.4 277.3 C733.2 276.8 722.4 276.3 710.8 276.9 C699.2 277.5 681.8 279.5 672.8 280.7 C663.8 281.9 663.3 282.6 657.0 283.9 C650.7 285.2 642.4 286.4 634.9 288.6 C627.4 290.8 612.8 295.2 612.0 297.0Z" fill="url(#cavg)"/>
    <g clip-path="url(#cavclip)">
      <ellipse cx="770" cy="297" rx="38" ry="9" fill="#4a060a" opacity="0.75" filter="url(#b3)"/>
      <ellipse cx="640" cy="300" rx="26" ry="7" fill="#6e0c10" opacity="0.6" filter="url(#b3)"/>
      <ellipse cx="715" cy="282" rx="70" ry="4" fill="#d83a30" opacity="0.55" filter="url(#b3)"/>
    </g>
    <path d="M612.0 297.0 C615.0 297.4 623.7 298.7 630.0 299.5 C636.3 300.3 643.3 301.0 650.0 302.0 C656.7 303.0 663.7 304.7 670.0 305.5 C676.3 306.3 682.2 306.8 688.0 307.0 C693.8 307.2 698.8 307.0 705.0 306.5 C711.2 306.0 718.3 305.2 725.0 304.0 C731.7 302.8 738.8 301.1 745.0 299.5 C751.2 297.9 756.2 295.9 762.0 294.5 C767.8 293.1 772.8 290.8 780.0 291.0 C787.2 291.2 800.8 295.2 805.0 296.0" fill="none" stroke="#5a080c" stroke-width="2.5" opacity="0.45" filter="url(#b1)"/>
    <path d="M603 305 Q630 302.5 668 308.5" fill="none" stroke="#f8c0b8" stroke-width="5" opacity="0.62" filter="url(#b3)"/>
    <path d="M700 311 Q750 308 800 297" fill="none" stroke="#d8484a" stroke-width="5" opacity="0.45" filter="url(#b3)"/>
  </g>
  <!-- stem -->
  <path d="M638.6 250.1 C640.0 251.9 644.8 254.0 648.3 257.4 C651.8 260.8 656.1 265.7 659.6 270.3 C663.1 274.9 666.2 280.2 669.2 284.8 C672.2 289.4 674.9 294.1 677.3 297.6 C679.7 301.1 681.4 304.5 683.7 305.7 C686.0 306.9 691.0 307.3 691.0 304.9 C691.0 302.5 686.2 295.6 683.7 291.2 C681.2 286.8 678.4 282.6 675.7 278.3 C673.0 274.0 670.6 269.7 667.6 265.4 C664.6 261.1 660.4 256.1 658.0 252.5 C655.6 248.9 655.1 245.2 653.1 243.7 C651.1 242.2 648.2 243.0 646.0 243.5 C643.8 244.0 641.2 245.4 640.0 246.5 C638.8 247.6 637.2 248.3 638.6 250.1Z" fill="url(#stemg)"/>
  <path d="M640.5 249.5 Q650 258 660 271 Q670 286 684 305" fill="none" stroke="#a8684a" stroke-width="1.4" opacity="0.6"/>
  <!-- leaf -->
  <path d="M696.6 262.4 Q686 270 679 279.5" fill="none" stroke="#c4cf4c" stroke-width="3" stroke-linecap="round"/>
  <path d="M695.0 263.3 C693.8 259.9 696.0 252.0 697.0 247.0 C698.0 242.0 698.0 238.6 701.3 233.2 C704.6 227.8 710.1 220.1 717.0 214.3 C723.9 208.5 733.9 202.2 742.4 198.5 C750.9 194.8 759.3 193.4 767.7 192.1 C776.1 190.8 784.3 189.3 793.0 190.9 C801.7 192.5 816.2 197.7 819.9 201.6 C823.6 205.5 818.4 209.0 815.0 214.3 C811.6 219.6 805.6 226.9 799.3 233.2 C793.0 239.5 784.6 247.2 777.2 252.2 C769.8 257.2 762.9 260.7 755.0 263.3 C747.1 265.9 738.1 267.3 729.7 268.0 C721.3 268.7 710.2 268.2 704.4 267.4 C698.6 266.6 696.2 266.7 695.0 263.3Z" fill="url(#leafg)"/>
  <path d="M695 263.3 Q750 245 819 202" fill="none" stroke="#b4dc78" stroke-width="1.2" opacity="0.95"/>
  <path d="M700 267.6 Q730 269.5 757 262.8 Q780 251.5 800 233" fill="none" stroke="#c6e07a" stroke-width="1" opacity="0.7"/>
  <g stroke="#9fd060" stroke-width="0.6" opacity="0.65" fill="none">
    <path d="M712 257 Q716 235 724 214"/><path d="M730 250 Q736 226 748 202"/><path d="M750 241 Q758 216 772 196"/><path d="M770 230 Q780 210 796 195"/>
    <path d="M716 256 Q735 262 752 262"/><path d="M738 247 Q760 252 778 249"/><path d="M760 236 Q782 238 797 233"/><path d="M782 224 Q800 224 811 217"/>
  </g>
</svg>
</div>

<!-- Gradient Fill dialog -->
<div id="dialog" class="bx" style="left:206px;top:136px;width:309px;height:218px;background:#f0f0f0;border:1px solid #23425c;box-shadow:1px 2px 9px rgba(0,0,0,.5)">
  <div id="dlg-title" style="left:0;top:0;width:307px;height:26px;background:#fff"></div>
  <svg style="left:286.6px;top:7.4px" width="12" height="12" viewBox="0 0 12 12"><path d="M1 1 L11 11 M11 1 L1 11" stroke="#111" stroke-width="1.2" fill="none"/></svg>
  <!-- gradient swatch -->
  <div class="bx" style="left:66px;top:37px;width:127px;height:23px;border:1px solid #000;background:#fff">
    <div style="left:0;top:0;width:107px;height:21px;background-color:#fff;background-image:linear-gradient(45deg,#ccc 25%,transparent 25%,transparent 75%,#ccc 75%),linear-gradient(45deg,#ccc 25%,transparent 25%,transparent 75%,#ccc 75%);background-size:8px 8px;background-position:0 0,4px 4px"></div>
    <div style="left:0;top:0;width:107px;height:21px;background:linear-gradient(90deg,rgba(0,0,0,0) 0%,rgba(0,0,0,.42) 50%,rgba(0,0,0,.86) 100%)"></div>
    <div style="left:107px;top:0;width:1px;height:21px;background:#000"></div>
    <svg style="left:110px;top:7px" width="12" height="8" viewBox="0 0 12 8"><path d="M1 1 H11 L6 6.5 Z" fill="#000"/></svg>
  </div>
  <!-- style select -->
  <div class="bx" style="left:65px;top:68px;width:85px;height:22px;border:1px solid #7a7a7a;background:#fff"></div>
  <svg style="left:135px;top:75px" width="10" height="7" viewBox="0 0 10 7"><path d="M1 1 L5 5.2 L9 1" stroke="#444" stroke-width="1.1" fill="none"/></svg>
  <!-- angle dial -->
  <div class="bx" style="left:66px;top:99px;width:35px;height:35px;border-radius:50%;border:1px solid #8c8c8c;background:linear-gradient(180deg,#dcdcdc 0%,#f3f3f3 100%)"></div>
  <div style="left:83px;top:102px;width:1px;height:14px;background:#444"></div>
  <div style="left:82px;top:114px;width:3px;height:3px;border-radius:50%;background:#444"></div>
  <!-- angle input -->
  <div class="bx" style="left:109px;top:106px;width:85px;height:20px;border:1px solid #7a7a7a;background:#fff"></div>
  <!-- scale input -->
  <div class="bx" style="left:65px;top:143px;width:62px;height:22px;border:1px solid #adadad;background:#fff"></div>
  <div class="bx" style="left:103px;top:143px;width:24px;height:22px;border:1px solid #adadad;background:#e4e4e4"></div>
  <svg style="left:112px;top:150px" width="6" height="9" viewBox="0 0 6 9"><path d="M1 1 L5 4.5 L1 8 Z" fill="#222"/></svg>
  <!-- checkboxes -->
  <div class="bx" style="left:65px;top:173px;width:13px;height:13px;border:1px solid #333;background:#fff"></div>
  <svg style="left:66px;top:174px" width="11" height="11" viewBox="0 0 11 11"><path d="M1.6 5.6 L4.2 8.4 L9.4 2.4" stroke="#333" stroke-width="1.3" fill="none"/></svg>
  <div class="bx" style="left:143px;top:173px;width:13px;height:13px;border:1px solid #333;background:#fff"></div>
  <div class="bx" style="left:65px;top:194px;width:13px;height:13px;border:1px solid #333;background:#fff"></div>
  <svg style="left:66px;top:195px" width="11" height="11" viewBox="0 0 11 11"><path d="M1.6 5.6 L4.2 8.4 L9.4 2.4" stroke="#333" stroke-width="1.3" fill="none"/></svg>
  <!-- buttons -->
  <div class="bx" style="left:220px;top:37px;width:76px;height:19px;border:2px solid #1f6fb0;background:#e1e1e1"></div>
  <div class="bx" style="left:220px;top:65px;width:76px;height:19px;border:1px solid #adadad;background:#e1e1e1"></div>
</div>

<div id="texts">
<span class="t" style="left:7.6px;top:1.2px;font-size:21px;color:transparent;transform:scaleX(0.841);font-weight:700;background:linear-gradient(165deg,#b4d0ee 0%,#86addc 40%,#5486c2 75%,#3f72b0 100%);-webkit-background-clip:text;background-clip:text">Ps</span>
<span class="t" style="left:47.0px;top:7.0px;font-size:12.5px;color:#e6e6e6;transform:scaleX(0.918)">File</span>
<span class="t" style="left:82.0px;top:7.0px;font-size:12.5px;color:#e6e6e6;transform:scaleX(0.951)">Edit</span>
<span class="t" style="left:119.0px;top:7.0px;font-size:12.5px;color:#e6e6e6;transform:scaleX(0.921)">Image</span>
<span class="t" style="left:169.0px;top:7.0px;font-size:12.5px;color:#e6e6e6;transform:scaleX(0.895)">Layer</span>
<span class="t" style="left:214.0px;top:7.0px;font-size:12.5px;color:#e6e6e6;transform:scaleX(0.922)">Type</span>
<span class="t" style="left:256.5px;top:7.0px;font-size:12.5px;color:#e6e6e6;transform:scaleX(0.906)">Select</span>
<span class="t" style="left:306.0px;top:7.0px;font-size:12.5px;color:#e6e6e6;transform:scaleX(0.936)">Filter</span>
<span class="t" style="left:348.5px;top:7.0px;font-size:12.5px;color:#e6e6e6;transform:scaleX(0.970)">3D</span>
<span class="t" style="left:381.0px;top:7.0px;font-size:12.5px;color:#e6e6e6;transform:scaleX(0.912)">View</span>
<span class="t" style="left:424.0px;top:7.0px;font-size:12.5px;color:#e6e6e6;transform:scaleX(0.978)">Window</span>
<span class="t" style="left:485.0px;top:7.0px;font-size:12.5px;color:#e6e6e6;transform:scaleX(0.972)">Help</span>
<span class="t" style="left:210.5px;top:142.6px;font-size:12px;color:#111;transform:scaleX(0.958)">Gradient Fill</span>
<span class="t" style="left:218.5px;top:177.6px;font-size:12px;color:#111;transform:scaleX(0.989)">Gradient:</span>
<span class="t" style="left:237.6px;top:209.0px;font-size:12px;color:#111;transform:scaleX(0.989)">Style:</span>
<span class="t" style="left:279.7px;top:209.0px;font-size:12px;color:#111;transform:scaleX(0.867)">Radial</span>
<span class="t" style="left:233.6px;top:245.8px;font-size:12px;color:#111;transform:scaleX(0.999)">Angle:</span>
<span class="t" style="left:322.2px;top:246.5px;font-size:12px;color:#111;transform:scaleX(0.988)">90</span>
<span class="t" style="left:403.0px;top:244.6px;font-size:15px;color:#111">°</span>
<span class="t" style="left:236.3px;top:283.0px;font-size:12px;color:#111;transform:scaleX(0.938)">Scale:</span>
<span class="t" style="left:278.0px;top:283.0px;font-size:12px;color:#111;letter-spacing:0.48px">456</span>
<span class="t" style="left:337.4px;top:283.0px;font-size:12px;color:#111;letter-spacing:0.43px">%</span>
<span class="t" style="left:288.6px;top:310.0px;font-size:12px;color:#111;transform:scaleX(0.940)">Reverse</span>
<span class="t" style="left:366.4px;top:310.0px;font-size:12px;color:#111;letter-spacing:0.12px">Dither</span>
<span class="t" style="left:288.6px;top:330.8px;font-size:12px;color:#111;letter-spacing:0.10px">Align with layer</span>
<span class="t" style="left:457.4px;top:176.8px;font-size:12px;color:#111;transform:scaleX(0.923)">OK</span>
<span class="t" style="left:447.5px;top:204.5px;font-size:12px;color:#111;transform:scaleX(0.937)">Cancel</span>
<span class="t" style="left:604.0px;top:38.8px;font-size:10.5px;color:#ececec;transform:scaleX(0.963)">Click and drag to reposition the gradient.</span>
<span class="t" style="left:1246.5px;top:39.3px;font-size:10.5px;color:#c4c4c4;transform:scaleX(0.898)">Essentials</span>
<span class="t" style="left:83.8px;top:67.0px;font-size:10.5px;color:#b2b2b2;letter-spacing:0.34px">74627-0-1459502036.psd @ 50% (Gradient Fill 1, RGB/8#) *</span>
<span class="t" style="left:421.7px;top:67.0px;font-size:10.5px;color:#b2b2b2;letter-spacing:0.50px">maxresdefault.jpg @ 66.7% (RGB/8#) *</span>
<span class="t" style="left:659.2px;top:67.2px;font-size:10.5px;color:#f2f2f2;letter-spacing:0.33px">74627-0-1459502036.jpg @ 50% (Layer 2, RGB/8#) *</span>
<span class="t" style="left:88.4px;top:712.7px;font-size:10.5px;color:#f0f0f0;transform:scaleX(0.914)">50%</span>
<span class="t" style="left:177.3px;top:712.7px;font-size:10.5px;color:#f0f0f0;transform:scaleX(0.981)">Missing: 0 / Changed: 0</span>
<span class="t" style="left:1144.1px;top:75.0px;font-size:10.5px;color:#ffffff;transform:scaleX(0.842);font-weight:700">Layers</span>
<span class="t" style="left:1187.2px;top:75.0px;font-size:10.5px;color:#b0b0b0;transform:scaleX(0.937)">Channels</span>
<span class="t" style="left:1244.3px;top:75.0px;font-size:10.5px;color:#b0b0b0;transform:scaleX(0.949)">Paths</span>
<span class="t" style="left:1163.3px;top:97.1px;font-size:10.5px;color:#b8b8b8;transform:scaleX(0.899)">Kind</span>
<span class="t" style="left:1149.4px;top:125.0px;font-size:10.5px;color:#9a9a9a;transform:scaleX(0.919)">Normal</span>
<span class="t" style="left:1276.8px;top:124.7px;font-size:10.5px;color:#ffffff;transform:scaleX(0.929)">Opacity:</span>
<span class="t" style="left:1324.6px;top:125.0px;font-size:10.5px;color:#6e6e6e;transform:scaleX(0.916)">100%</span>
<span class="t" style="left:1143.6px;top:153.7px;font-size:10.5px;color:#ffffff;transform:scaleX(0.892)">Lock:</span>
<span class="t" style="left:1299.0px;top:152.5px;font-size:10.5px;color:#ffffff;transform:scaleX(0.832)">Fill:</span>
<span class="t" style="left:1324.6px;top:153.3px;font-size:10.5px;color:#6e6e6e;transform:scaleX(0.916)">100%</span>
<span class="t" style="left:1259.7px;top:189.7px;font-size:10.5px;color:#f4f4f4;transform:scaleX(0.927)">Gradient Fill 1</span>
<span class="t" style="left:1213.0px;top:229.0px;font-size:10.5px;color:#f4f4f4;transform:scaleX(0.942)">Layer 2</span>
<span class="t" style="left:1213.0px;top:268.0px;font-size:10.5px;color:#f4f4f4;transform:scaleX(0.942)">Layer 0</span>
<span class="t" style="left:1213.0px;top:307.0px;font-size:10.5px;color:#f4f4f4;transform:scaleX(0.942)">Layer 1</span>
</div>
<!-- annotation: orange highlight ellipse + pointer line -->
<svg id="annot" style="left:0;top:0;pointer-events:none" width="1366" height="727" viewBox="0 0 1366 727">
  <path d="M372.5 137.7 C377.3 138.0 381.4 137.8 388.9 138.9 C396.4 140.0 408.1 141.5 417.7 144.0 C427.3 146.5 437.0 149.8 446.6 153.7 C456.2 157.6 467.5 162.9 475.5 167.2 C483.5 171.5 488.3 174.7 494.7 179.7 C501.1 184.7 508.5 190.9 514.0 197.0 C519.5 203.1 524.1 209.8 527.5 216.2 C530.9 222.6 532.7 228.4 534.2 235.5 C535.7 242.6 537.2 250.5 536.6 258.6 C536.0 266.7 533.4 276.5 530.6 284.3 C527.8 292.1 524.5 298.7 519.8 305.4 C515.1 312.1 509.1 318.6 502.4 324.7 C495.6 330.8 487.6 336.9 479.3 342.0 C471.0 347.1 462.7 351.5 452.4 355.5 C442.1 359.5 429.9 363.3 417.7 366.0 C405.5 368.7 388.8 370.8 379.2 371.9 C369.6 373.0 367.5 373.3 360.0 372.8 C352.5 372.3 344.8 371.1 334.0 369.0 C323.2 366.9 307.4 363.8 295.5 360.3 C283.6 356.8 272.4 352.8 262.8 347.8 C253.2 342.8 245.1 336.6 237.7 330.5 C230.3 324.4 223.9 317.6 218.5 311.2 C213.1 304.8 208.6 298.8 205.0 292.0 C201.4 285.2 198.8 276.7 197.0 270.5 C195.2 264.3 194.7 259.9 194.4 255.0 C194.1 250.1 194.5 245.3 195.3 241.0 C196.1 236.7 197.4 232.7 199.0 229.0 C200.6 225.3 201.8 223.7 205.0 219.0 C208.2 214.3 213.1 206.7 218.5 200.8 C223.9 194.9 229.7 189.8 237.7 183.5 C245.7 177.2 257.0 168.8 266.6 163.3 C276.2 157.9 284.3 154.5 295.5 150.8 C306.7 147.1 323.2 143.4 334.0 141.2 C344.8 138.9 353.6 137.9 360.0 137.3 C366.4 136.7 367.7 137.4 372.5 137.7Z" fill="none" stroke="#f0822c" stroke-width="5.4" stroke-linejoin="round"/>
  <path d="M469.7 339 L1259.8 708.5" fill="none" stroke="#f0822c" stroke-width="5.9" stroke-linecap="round"/>
</svg>

</div>
</body>
</html>
